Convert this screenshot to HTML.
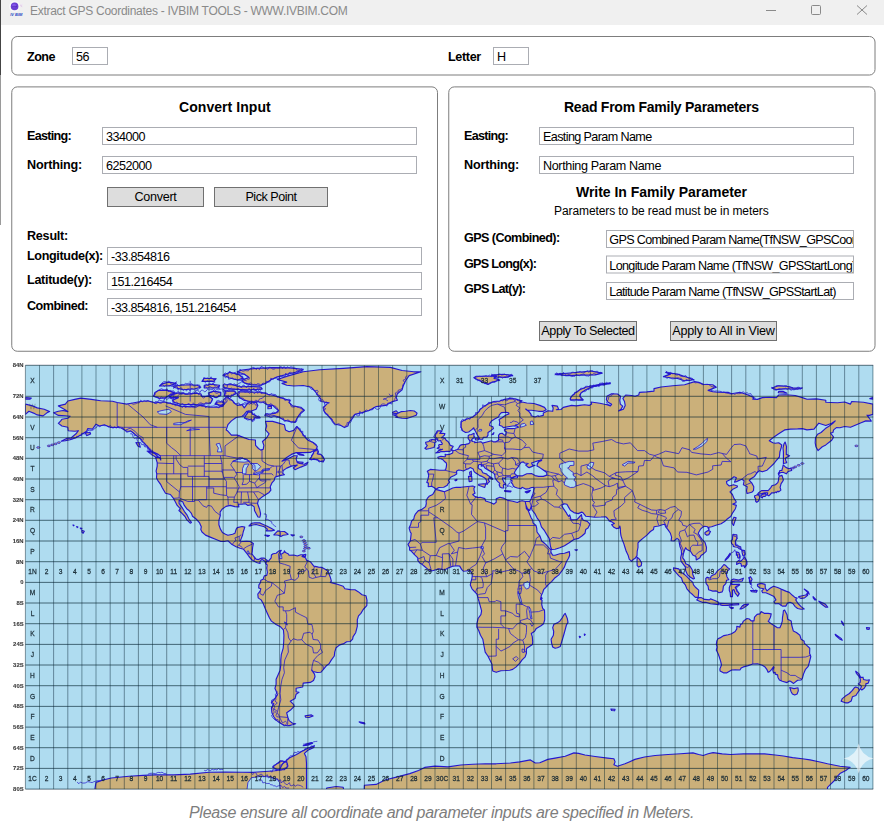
<!DOCTYPE html>
<html lang="en"><head><meta charset="utf-8"><title>Extract GPS Coordinates - IVBIM TOOLS - WWW.IVBIM.COM</title>
<style>
*{box-sizing:border-box;margin:0;padding:0}
html,body{width:884px;height:834px;overflow:hidden;background:#fff}
body{position:relative;font-family:"Liberation Sans",sans-serif;font-size:13px;color:#000}
.abs{position:absolute;white-space:nowrap}
.titlebar{left:0;top:0;width:884px;height:25px;background:#f0f0f0}
.ttl{left:30px;top:4px;font-size:12px;color:#8a8a8a;line-height:15px}
.gb{border:1px solid #8c8c8c;border-radius:6px;background:#fff;transform:translate(-0.5px,-0.5px)}
.lb{font-weight:bold;font-size:12.6px;line-height:16px;letter-spacing:-0.35px}
.hd{font-weight:bold;font-size:14px;line-height:18px;letter-spacing:-0.3px}
.in{border:1px solid #abadb3;background:#fff;height:18px;font-size:12.6px;line-height:16px;padding-left:3px;padding-top:1px;overflow:hidden;letter-spacing:-0.52px}
.bt{border:1px solid #707070;background:#dddddd;text-align:center;font-size:12.6px;line-height:18px;letter-spacing:-0.3px}
.ft{font-style:italic;color:#7d7d7d;font-size:16px;line-height:20px;letter-spacing:-0.3px}
</style></head><body>
<div class="abs titlebar"></div>
<div class="abs" style="left:0;top:0;width:1px;height:75px;background:#444"></div>
<div class="abs" style="left:0;top:75px;width:1px;height:150px;background:#9a9a9a"></div>
<svg class="abs" style="left:6px;top:0" width="22" height="20" viewBox="0 0 22 20"><circle cx="8.6" cy="6.4" r="5.6" fill="#fff" fill-opacity="0.55"/><circle cx="8.6" cy="6.4" r="3.8" fill="#6b3fd2"/><circle cx="8" cy="5.6" r="1.9" fill="#8a5cf0" fill-opacity="0.8"/><path d="M6.2 6.6 H11" stroke="#4a28a8" stroke-width="0.6"/><path d="M13.6 4.6 L17 3.6 L16 7.4 L14 7 Z" fill="#efe6f4"/><path d="M14.4 5.2 L16.2 6.6" stroke="#c9a0c8" stroke-width="0.5"/><text x="4.2" y="16" font-family="Liberation Sans,sans-serif" font-size="4.2" font-weight="bold" font-style="italic" fill="#2746c4" textLength="12.2" lengthAdjust="spacingAndGlyphs">IV BIM</text></svg>
<div class="abs ttl" id="ttl" style="letter-spacing:-0.28px">Extract GPS Coordinates - IVBIM TOOLS - WWW.IVBIM.COM</div>
<svg class="abs" style="left:750px;top:0" width="134" height="26" viewBox="0 0 134 26" fill="none" stroke="#8a8a8a" stroke-width="1"><path d="M16 10.5 H26"/><rect x="61.5" y="5.5" width="9" height="9" rx="1"/><path d="M107 5.5 L117 14.5 M117 5.5 L107 14.5"/></svg>

<svg class="abs" style="left:0;top:30px" width="884" height="330" viewBox="0 30 884 330" fill="#fff" stroke="#7d7d7d" stroke-width="1"><rect x="11.75" y="36.5" width="863.25" height="38.5" rx="5.5"/><rect x="11.75" y="86.9" width="425.75" height="264.35" rx="5.5"/><rect x="448.75" y="86.9" width="426.25" height="264.35" rx="5.5"/></svg>
<div class="abs lb" id="zone" style="letter-spacing:-0.52px;left:27px;top:49px">Zone</div>
<div class="abs in" style="left:72px;top:47px;width:36px">56</div>
<div class="abs lb" id="letter" style="letter-spacing:-0.35px;left:448px;top:49px">Letter</div>
<div class="abs in" style="left:493px;top:47px;width:36px">H</div>

<div class="abs hd" id="h1" style="letter-spacing:0.06px;left:179px;top:98px">Convert Input</div>
<div class="abs lb" id="l1" style="letter-spacing:-0.71px;left:27px;top:128px">Easting:</div>
<div class="abs in" style="left:102px;top:127px;width:315px">334000</div>
<div class="abs lb" id="l2" style="letter-spacing:-0.18px;left:27px;top:157px">Northing:</div>
<div class="abs in" style="left:102px;top:156px;width:315px">6252000</div>
<div class="abs bt" style="left:107px;top:187px;width:97px;height:20px"><span id="b1" style="letter-spacing:-0.3px">Convert</span></div>
<div class="abs bt" style="left:214px;top:187px;width:114px;height:20px"><span id="b2" style="letter-spacing:-0.48px">Pick Point</span></div>
<div class="abs lb" id="l3" style="letter-spacing:-0.24px;left:27px;top:228px">Result:</div>
<div class="abs lb" id="l4" style="letter-spacing:-0.35px;left:27px;top:248px">Longitude(x):</div>
<div class="abs in" style="left:107px;top:247px;width:315px"><span id="i4" style="letter-spacing:-0.52px">-33.854816</span></div>
<div class="abs lb" id="l5" style="letter-spacing:-0.3px;left:27px;top:272px">Latitude(y):</div>
<div class="abs in" style="left:107px;top:272px;width:315px">151.216454</div>
<div class="abs lb" id="l6" style="letter-spacing:-0.53px;left:27px;top:298px">Combined:</div>
<div class="abs in" style="left:107px;top:298px;width:315px"><span id="i6" style="letter-spacing:-0.56px">-33.854816, 151.216454</span></div>

<div class="abs hd" id="h2" style="letter-spacing:-0.25px;left:564px;top:98px">Read From Family Parameters</div>
<div class="abs lb" style="letter-spacing:-0.71px;left:464px;top:128px">Easting:</div>
<div class="abs in" style="left:539px;top:127px;width:315px"><span id="i7" style="letter-spacing:-0.62px">Easting Param Name</span></div>
<div class="abs lb" style="letter-spacing:-0.18px;left:464px;top:157px">Northing:</div>
<div class="abs in" style="left:539px;top:156px;width:315px"><span id="i8" style="letter-spacing:-0.38px">Northing Param Name</span></div>
<div class="abs hd" id="h3" style="letter-spacing:-0.03px;left:576px;top:183px">Write In Family Parameter</div>
<div class="abs" id="sub" style="letter-spacing:-0.09px;left:554px;top:203px;transform:translateY(0.6px);font-size:12px;line-height:15px">Parameters to be read must be in meters</div>
<div class="abs lb" id="l7" style="letter-spacing:-0.58px;left:464px;top:230px">GPS (Combined):</div>
<div class="abs in" style="left:606px;top:230px;width:248px;padding-left:2.3px"><span id="i9" style="letter-spacing:-0.67px">GPS Combined Param Name(TfNSW_GPSCoordinates)</span></div>
<div class="abs lb" id="l8" style="letter-spacing:-0.69px;left:464px;top:255px;transform:translateY(0.6px)">GPS Long(x):</div>
<div class="abs in" style="left:606px;top:255px;width:248px;padding-left:2.3px;transform:translateY(0.5px)"><span id="i10" style="letter-spacing:-0.67px">Longitude Param Name (TfNSW_GPSStartLong)</span></div>
<div class="abs lb" id="l9" style="letter-spacing:-0.66px;left:464px;top:281px">GPS Lat(y):</div>
<div class="abs in" style="left:606px;top:282px;width:248px;padding-left:2.3px"><span id="i11" style="letter-spacing:-0.67px">Latitude Param Name (TfNSW_GPSStartLat)</span></div>
<div class="abs bt" style="left:539px;top:321px;width:98px;height:20px"><span id="b3" style="letter-spacing:-0.43px">Apply To Selected</span></div>
<div class="abs bt" style="left:670px;top:321px;width:107px;height:20px"><span id="b4" style="letter-spacing:-0.185px">Apply to All in View</span></div>
<svg class="abs" style="left:0;top:355px" width="884" height="445" viewBox="0 355 884 445" font-family="Liberation Sans,sans-serif">
<defs><clipPath id="mc"><rect x="25.4" y="365.3" width="847.8" height="423.8"/></clipPath><filter id="bl" x="-2%" y="-2%" width="104%" height="104%"><feGaussianBlur stdDeviation="0.45"/></filter><filter id="bl2" x="-2%" y="-2%" width="104%" height="104%"><feGaussianBlur stdDeviation="0.25"/></filter></defs>
<g filter="url(#bl)">
<rect x="25.4" y="365.3" width="847.8" height="423.8" fill="#afdcf0"/>
<g clip-path="url(#mc)">
<path d="M53.6,412.8 58.4,411.3 63.1,410.5 67.8,411.6 64.2,409.2 58.4,405.9 65.4,404.1 67.8,401.0 74.8,399.4 80.7,398.1 91.3,399.4 100.7,400.7 112.5,401.2 117.2,402.5 126.6,404.1 131.3,403.3 140.8,401.5 147.8,400.7 154.9,402.8 164.3,402.0 173.7,404.1 180.8,406.1 190.2,406.9 194.9,406.1 202.0,405.4 209.0,407.2 218.4,407.2 223.2,406.1 224.3,403.3 223.2,400.2 226.7,396.6 230.2,398.9 232.6,400.7 233.7,402.8 237.3,405.4 242.0,404.6 244.3,407.9 247.9,402.8 256.1,402.3 257.8,405.4 256.1,409.2 251.4,411.0 246.7,411.3 244.3,414.4 242.0,416.5 236.1,417.5 231.4,420.9 227.9,424.7 226.2,429.9 227.4,430.7 231.4,435.1 237.3,435.1 242.0,436.9 249.0,439.5 255.4,440.0 255.6,445.4 258.5,448.5 260.8,450.1 263.2,449.3 263.9,445.4 262.5,441.5 266.7,437.7 269.1,433.8 265.5,429.9 266.7,426.0 265.5,421.4 272.6,421.4 279.6,423.4 284.4,424.7 285.5,429.9 289.1,431.7 293.8,430.4 296.6,426.5 300.8,431.2 304.4,436.4 307.9,440.2 313.8,442.8 317.3,446.7 316.1,449.3 310.3,452.4 303.2,452.6 296.1,452.6 291.4,454.4 286.7,457.5 282.0,461.2 286.7,459.4 293.8,455.7 297.3,455.7 296.1,458.8 297.3,462.7 299.7,463.5 304.4,464.3 307.9,462.2 306.7,464.8 300.8,467.1 295.0,469.7 293.3,467.9 297.3,465.0 291.4,466.1 286.7,468.1 283.2,470.5 282.7,473.3 284.4,474.6 280.8,475.4 275.6,476.9 274.9,477.7 274.2,480.3 271.9,482.9 270.2,486.7 270.9,490.1 269.1,492.4 265.5,494.8 262.0,497.1 258.5,499.7 257.5,503.5 259.6,509.2 260.6,513.9 259.9,517.2 258.0,517.0 256.6,514.4 254.5,510.5 254.2,506.9 251.4,504.8 247.9,505.4 245.5,503.8 242.0,504.1 238.5,504.3 238.9,506.9 234.9,506.6 230.2,505.4 226.0,506.4 222.0,509.2 220.1,512.1 220.3,515.7 218.9,520.3 218.9,524.7 220.3,528.9 222.4,532.5 225.5,534.3 227.9,535.3 232.6,534.3 234.9,533.3 236.1,529.4 237.3,527.6 242.0,526.5 244.8,527.1 243.2,532.0 242.5,535.3 241.3,538.4 240.1,541.3 243.2,541.5 246.7,541.3 250.2,541.5 253.3,543.6 252.6,547.5 252.3,551.3 251.9,553.9 253.8,556.5 256.1,559.1 258.5,559.6 261.3,558.1 264.3,558.1 266.9,560.1 265.8,563.8 264.6,560.9 262.0,559.4 259.9,561.4 260.1,563.5 257.3,562.7 254.2,561.2 252.1,560.1 249.0,556.5 247.2,553.9 243.6,549.3 240.1,548.2 236.1,546.7 232.1,544.6 227.9,540.8 224.3,541.5 220.8,541.5 216.1,539.5 210.2,537.1 205.5,535.1 202.0,532.0 200.8,529.4 201.3,526.8 199.6,522.9 196.1,519.0 192.5,516.2 191.4,513.4 189.0,510.5 186.7,508.7 184.3,505.4 182.7,501.7 179.1,500.4 179.1,503.5 182.0,507.4 184.3,511.3 187.1,515.2 189.0,519.0 191.4,522.4 190.2,523.2 186.7,519.6 185.0,516.5 182.0,513.4 178.9,510.5 180.3,508.7 177.2,505.4 174.9,501.0 173.5,498.4 170.4,494.5 165.5,493.2 162.4,488.0 160.8,484.7 157.7,480.3 156.5,478.0 156.8,473.8 156.1,471.2 157.2,466.1 157.2,462.7 155.6,457.3 159.6,457.5 160.8,460.1 160.1,455.7 156.1,453.2 150.2,450.6 147.8,446.7 143.1,442.3 140.8,438.9 136.0,435.1 131.3,431.2 126.6,431.2 120.7,427.8 114.9,427.3 110.2,427.3 104.3,424.7 99.6,426.0 96.0,424.2 92.5,429.1 87.8,428.6 86.6,431.2 80.7,435.1 76.0,437.7 70.1,439.7 65.4,440.8 61.2,441.3 66.6,438.4 71.3,437.7 76.0,433.8 78.4,430.7 74.8,431.2 68.2,430.7 67.8,427.3 61.9,426.0 58.4,423.4 60.7,420.9 61.9,419.3 67.8,418.3 70.1,416.2 65.4,415.7 58.4,415.4 53.6,412.8Z M266.9,560.1 268.1,561.7 271.2,557.8 271.4,555.0 273.1,553.7 276.1,553.2 279.2,550.8 281.3,550.3 279.9,552.6 280.8,554.4 283.9,552.6 284.4,550.8 285.5,552.6 288.4,553.9 289.1,555.2 293.8,555.0 297.3,556.0 300.8,554.7 303.4,554.7 302.0,556.5 305.5,557.8 306.7,560.4 310.3,561.7 313.8,566.1 318.5,567.1 322.0,567.4 325.6,569.4 327.9,571.0 330.3,577.2 331.4,581.1 330.3,582.4 335.0,583.6 337.3,584.2 343.2,586.2 344.9,588.8 350.3,589.6 355.0,589.8 358.5,591.9 362.0,594.8 366.0,595.8 367.0,600.4 366.8,605.6 363.2,609.5 360.9,613.4 358.5,615.9 357.3,619.8 357.3,626.3 355.7,632.7 353.1,636.6 352.6,639.2 350.3,641.5 346.7,641.8 343.2,643.9 339.7,644.9 336.1,647.7 334.7,652.1 334.3,656.0 331.4,659.9 329.1,663.8 326.3,665.8 323.2,669.7 320.8,672.3 317.3,672.5 313.1,671.5 311.7,670.2 314.5,674.1 315.0,676.7 313.5,680.5 310.3,682.4 303.2,683.1 302.7,687.0 296.1,688.3 296.1,691.7 299.0,692.2 296.1,694.2 295.0,698.6 290.2,701.2 293.8,704.6 294.2,706.4 290.2,710.3 286.7,712.8 287.9,717.5 288.4,718.8 289.1,720.6 292.6,723.2 295.7,723.7 292.6,724.7 287.9,725.8 284.4,725.3 279.6,722.7 276.1,720.1 273.8,716.7 271.9,712.8 271.4,707.7 273.8,703.8 271.4,702.5 274.9,698.6 277.3,694.8 276.1,690.9 274.9,688.3 276.1,684.4 276.1,679.3 277.8,675.4 280.1,670.2 280.8,665.0 280.8,659.9 281.3,654.7 283.2,648.2 283.7,641.8 283.9,635.3 283.4,629.9 280.8,627.1 276.1,624.5 271.4,621.1 269.5,618.0 267.4,613.4 265.1,608.2 263.2,603.5 261.1,599.9 258.2,597.9 257.8,594.0 260.1,591.1 260.8,588.8 258.7,588.0 258.9,584.9 260.6,582.4 260.8,580.3 263.2,579.3 263.6,577.7 264.3,575.9 266.7,575.4 267.4,572.5 266.7,568.1 267.2,565.0 265.8,563.8Z M277.3,379.5 289.1,375.6 303.2,371.8 319.7,369.7 343.2,368.4 366.8,366.6 390.3,367.4 402.1,370.5 413.8,371.8 420.9,371.8 409.1,375.6 405.6,380.8 403.2,386.0 402.1,389.8 397.4,393.7 396.2,397.6 397.4,400.2 391.5,402.0 385.6,405.4 376.2,406.6 369.1,410.5 362.0,412.6 355.0,414.4 352.6,418.3 349.1,422.1 347.9,426.0 344.4,427.6 340.9,425.5 335.0,424.0 331.4,419.6 327.9,415.7 324.4,411.8 323.2,407.9 326.7,404.1 329.1,402.8 320.8,401.5 320.8,398.9 318.5,396.3 315.0,391.1 311.4,387.3 303.2,385.5 293.8,386.0 286.7,385.2 282.0,383.4 286.7,382.1 277.3,379.5Z M435.3,489.8 436.7,489.6 442.1,491.1 444.4,491.7 449.1,489.8 452.7,488.0 456.2,487.3 460.9,487.3 465.6,486.7 470.3,486.2 472.7,486.0 475.0,486.7 473.9,488.3 474.1,490.6 475.0,493.2 472.7,494.5 475.0,496.6 478.6,497.6 480.2,497.3 484.9,498.6 485.6,501.0 490.3,502.5 493.9,504.1 496.2,502.3 496.2,498.9 499.8,497.3 503.3,498.1 508.0,500.4 512.7,501.2 517.4,502.5 519.8,501.2 522.1,500.7 525.2,501.5 525.9,504.8 526.4,508.7 528.2,510.5 529.2,513.1 531.1,517.8 532.7,520.3 533.0,522.9 536.0,525.5 536.7,528.1 537.0,532.0 539.8,535.8 541.7,541.0 543.3,542.3 545.7,544.4 549.2,548.2 551.1,550.1 550.8,552.1 552.7,555.2 555.1,555.2 559.8,553.7 564.5,553.2 569.4,551.6 569.7,555.2 568.5,558.3 566.4,561.7 564.5,566.9 562.1,570.7 558.6,575.1 555.1,577.7 551.6,581.6 548.0,584.9 545.7,587.5 543.8,589.3 542.6,592.7 541.4,595.3 540.5,599.2 542.1,600.4 541.7,604.3 542.6,608.2 544.5,610.3 544.7,614.7 544.7,619.8 543.6,623.7 541.0,625.8 536.3,628.4 534.6,631.2 531.3,633.5 532.3,636.6 532.7,641.8 532.5,644.4 526.8,648.2 526.4,649.5 526.4,653.4 525.2,656.8 522.1,659.9 519.8,663.2 516.2,666.9 512.7,669.4 509.7,670.2 505.6,670.5 500.9,670.7 496.2,672.3 492.7,671.0 492.2,667.1 492.0,664.3 489.9,659.9 488.0,656.3 485.2,652.1 484.2,647.0 483.3,641.8 482.8,639.2 480.5,635.3 478.6,630.2 476.9,627.1 476.9,623.7 478.1,618.5 480.9,614.7 481.6,610.8 480.2,605.6 478.1,598.4 477.9,597.3 476.9,594.0 475.0,592.2 472.0,588.8 470.3,584.9 471.0,581.6 471.7,579.5 472.2,576.4 472.2,574.1 471.5,572.3 469.9,570.5 468.0,570.7 465.6,571.0 463.3,571.2 461.6,569.4 459.7,566.1 457.2,565.8 452.7,566.3 449.1,567.6 444.4,570.0 442.1,569.2 438.6,568.9 435.0,570.0 431.5,571.0 428.0,569.4 423.7,565.8 422.1,564.3 419.7,563.0 417.8,560.4 417.8,557.8 415.0,555.2 413.8,553.9 411.5,551.3 409.6,550.1 409.6,547.5 408.0,544.4 410.3,541.0 410.8,537.1 411.2,533.3 410.3,532.0 409.1,528.1 410.8,524.2 411.5,521.1 413.8,519.0 414.3,516.5 415.2,514.4 418.1,510.8 422.1,509.2 425.6,506.6 426.3,503.5 426.1,501.0 427.3,498.4 429.1,496.3 432.7,494.5 434.3,491.9 435.3,489.8Z M436.0,489.3 434.3,487.8 431.7,486.2 428.2,486.7 428.4,483.1 426.8,482.4 428.0,479.0 428.7,475.9 428.2,473.1 427.3,471.2 430.3,469.4 435.0,469.7 439.7,470.2 444.4,470.2 445.6,469.7 446.3,467.1 446.6,464.5 446.3,463.0 444.2,461.2 443.3,460.1 440.9,458.8 438.6,458.6 437.8,457.3 440.9,456.3 444.4,456.8 445.4,456.5 445.1,454.2 446.3,454.7 449.4,454.4 452.7,452.9 452.9,450.8 455.0,450.3 457.4,449.5 458.6,448.0 460.2,445.4 462.1,444.6 465.6,444.4 468.0,443.9 469.4,443.1 470.1,442.0 469.4,440.2 468.2,438.7 468.2,435.8 469.4,434.8 471.5,434.6 474.1,433.3 473.9,436.4 474.8,436.9 473.2,438.2 471.7,439.5 471.7,440.8 472.7,441.5 475.0,441.8 474.6,442.8 477.4,442.3 480.9,441.8 482.6,443.1 486.8,442.0 491.5,440.8 493.2,441.8 495.8,441.8 498.6,440.2 498.6,437.7 498.6,435.1 500.2,433.5 502.1,433.3 504.5,435.1 505.9,435.1 506.4,431.7 504.5,430.9 504.5,429.4 508.0,428.6 512.7,428.6 515.1,428.3 518.6,427.3 516.2,425.8 512.7,426.0 508.0,426.8 503.3,427.6 502.1,426.3 499.3,425.2 499.8,422.1 499.1,419.6 502.1,417.8 505.6,415.2 508.9,413.9 508.7,412.8 506.1,412.3 501.4,412.6 499.3,414.9 498.6,417.0 495.1,418.8 491.5,420.9 489.9,423.4 489.6,425.5 492.9,426.8 493.4,428.6 491.1,430.4 488.0,432.5 488.0,435.1 486.8,437.1 483.3,437.4 482.6,439.2 479.8,439.2 478.8,437.1 476.9,434.3 475.5,431.2 474.1,429.1 473.9,427.8 471.5,429.9 468.7,432.0 465.6,432.5 462.6,430.7 461.2,427.3 460.9,424.7 461.2,422.1 464.0,420.3 469.2,418.3 472.7,417.0 476.2,414.4 478.6,411.8 480.2,409.2 483.8,406.6 486.8,404.8 490.3,402.8 493.9,401.5 499.8,401.0 504.5,399.4 509.7,398.6 515.1,398.9 519.8,400.2 522.1,400.7 519.8,402.0 523.3,402.3 526.8,403.0 533.9,403.5 539.8,405.4 544.5,407.4 546.1,409.7 543.3,411.3 538.6,411.3 531.5,410.3 526.8,410.0 525.7,409.0 529.2,411.8 531.1,414.4 531.1,415.7 535.1,417.0 538.1,415.7 538.6,416.5 543.3,415.4 543.3,413.1 548.0,410.8 552.7,411.3 553.2,407.9 552.0,405.4 557.4,406.1 558.6,409.2 556.3,409.7 561.0,409.5 563.3,407.4 571.6,405.4 576.3,405.9 579.8,405.4 584.5,404.8 589.2,405.4 591.6,404.1 591.1,402.0 599.8,403.3 604.5,404.3 606.9,404.6 610.4,405.9 611.6,404.3 608.1,402.3 606.4,399.7 606.9,396.3 611.6,393.7 617.5,394.0 620.5,396.3 619.8,400.2 620.3,404.1 622.7,406.1 621.0,409.2 618.6,411.0 623.4,409.2 625.2,405.4 624.5,401.5 622.9,398.4 625.7,395.0 631.6,395.5 635.1,396.3 638.7,395.0 639.4,392.4 646.9,391.9 654.0,391.1 654.0,388.6 661.0,387.0 672.8,385.7 684.6,384.7 694.7,381.6 698.7,382.4 703.4,384.2 712.8,384.7 716.3,387.3 708.1,390.4 712.8,391.7 717.5,392.2 728.1,392.4 731.6,393.7 739.9,392.2 748.1,395.0 754.0,397.6 752.8,399.2 757.5,399.4 762.3,397.6 769.3,397.3 776.4,397.6 778.7,395.0 785.8,394.8 795.2,395.5 802.3,397.6 807.0,399.2 816.4,398.9 825.8,400.2 825.8,402.3 830.5,402.5 837.6,402.8 844.6,402.0 850.5,404.1 851.7,401.5 863.5,402.3 872.9,404.1 872.9,414.4 869.4,415.4 867.0,415.2 869.4,418.3 871.3,421.1 865.8,420.9 861.1,422.7 856.4,424.7 850.5,427.3 844.6,426.5 839.9,427.8 836.4,427.6 833.6,429.9 832.9,432.5 830.5,433.0 833.6,437.1 831.7,440.2 830.1,441.5 825.8,444.9 822.3,446.7 818.0,450.6 815.9,446.7 815.2,442.8 815.5,437.7 817.6,434.3 821.1,432.5 825.3,428.6 829.3,426.0 832.9,423.4 835.2,420.9 831.7,423.2 825.8,425.5 818.8,423.2 814.0,429.1 807.0,429.9 802.3,428.6 797.6,428.9 790.5,429.1 784.6,429.9 778.7,433.8 774.0,436.9 769.3,440.8 772.8,442.8 775.2,443.3 778.7,442.8 781.8,444.9 781.1,448.0 779.9,451.9 779.4,457.0 776.4,460.4 774.0,463.5 770.5,466.9 767.0,470.2 762.3,471.8 759.4,470.7 756.8,473.1 754.5,476.4 750.5,479.0 749.3,480.3 751.7,482.9 753.8,486.7 753.5,490.6 751.7,492.2 747.0,493.5 746.5,490.6 747.2,486.7 743.4,484.7 744.1,480.8 741.8,479.3 736.4,481.6 734.5,482.1 736.4,477.7 734.0,476.7 730.5,479.5 726.5,481.6 726.9,483.9 729.3,486.0 733.5,484.7 737.5,486.0 737.3,487.0 732.8,489.3 730.0,491.9 732.4,494.5 734.0,498.4 736.1,501.5 735.9,502.8 732.8,504.1 736.4,505.4 735.4,508.7 732.8,512.6 730.7,516.5 726.9,519.3 724.6,521.6 721.1,523.7 717.5,524.7 715.2,525.5 711.6,526.8 708.8,527.3 709.0,529.9 707.6,526.8 704.6,526.3 702.2,527.6 700.3,529.4 698.2,533.3 699.9,536.4 702.2,539.7 705.0,542.3 706.5,547.5 706.2,551.3 703.4,553.9 701.0,555.5 699.9,557.8 696.3,559.9 695.9,556.5 692.8,555.0 690.5,551.3 686.9,549.5 685.7,547.7 684.6,550.1 683.4,553.9 682.7,557.8 684.6,560.4 685.7,563.8 688.1,564.8 690.0,566.3 692.3,570.0 692.8,574.6 694.5,578.5 693.3,579.0 690.5,577.2 687.6,574.9 685.7,570.7 685.3,566.9 683.4,564.3 681.0,561.2 680.6,557.8 681.5,553.9 681.3,550.1 679.9,546.2 679.2,542.3 678.9,539.7 677.0,538.4 674.0,541.0 671.1,540.8 671.6,537.1 670.4,533.3 668.1,529.9 665.7,526.8 664.6,524.2 662.2,524.7 658.7,526.0 654.0,526.8 653.5,529.4 650.4,531.5 646.9,535.1 642.9,538.4 639.8,541.0 638.0,542.8 638.0,547.5 637.2,551.3 637.0,555.7 635.1,558.3 633.2,559.4 631.6,561.4 629.2,559.1 628.1,555.2 626.2,551.3 625.0,547.5 623.8,543.6 622.2,539.7 621.0,535.8 620.5,532.7 620.3,528.1 619.8,526.0 619.1,528.1 616.3,528.6 613.9,527.3 611.6,524.7 614.4,523.4 611.1,521.6 609.2,520.9 607.6,518.5 605.7,516.7 601.0,517.0 595.1,517.2 590.4,516.7 585.7,516.2 583.3,513.1 581.7,512.1 578.2,513.6 573.9,512.6 570.4,510.3 568.7,507.4 566.9,504.3 564.3,503.8 562.1,504.8 562.1,506.4 563.8,509.2 566.2,512.6 567.3,514.7 568.7,516.5 569.7,514.9 570.6,517.8 570.9,519.8 573.9,519.8 577.0,519.6 579.8,516.5 581.5,514.7 581.9,517.8 583.3,520.3 587.3,521.4 589.9,524.2 588.0,528.1 585.7,529.6 585.0,533.3 582.2,535.8 578.6,538.4 573.9,539.5 569.2,542.8 564.5,545.7 559.8,547.7 555.1,549.3 551.6,549.5 550.4,546.2 549.9,542.3 549.2,538.4 546.8,534.6 544.5,530.7 541.4,526.8 539.8,521.6 537.0,517.8 535.1,513.9 532.0,510.0 531.3,506.1 529.9,510.0 529.7,510.5 527.5,508.7 525.9,505.1 525.9,504.8 525.2,501.5 529.7,501.5 531.1,498.9 531.8,496.8 533.0,493.7 533.7,490.6 533.9,488.6 534.1,487.3 531.5,487.5 529.2,488.6 525.7,489.1 522.1,487.3 521.0,488.6 517.4,488.0 515.1,487.3 513.4,486.2 512.7,484.2 511.5,482.9 512.2,480.8 510.8,480.3 510.8,478.7 513.9,478.0 517.4,477.7 517.7,475.9 522.1,475.9 526.8,473.8 531.5,473.6 535.1,475.6 538.6,476.4 543.3,476.4 546.8,475.1 546.8,472.5 543.3,470.0 539.8,467.6 537.0,466.1 537.4,463.5 539.3,461.4 541.7,460.4 538.6,460.6 535.1,461.7 531.5,463.0 532.7,465.3 535.1,465.3 532.7,466.1 529.2,467.6 528.0,467.1 525.7,465.0 528.2,463.5 524.5,463.0 523.3,461.9 521.4,462.2 519.1,464.8 518.8,466.1 516.7,468.7 515.1,471.2 514.4,472.5 515.1,474.1 517.2,475.6 515.1,476.4 513.9,476.7 512.0,477.7 510.4,477.2 508.0,476.7 505.6,477.2 504.9,478.5 505.6,479.0 504.0,478.2 502.8,477.7 502.4,479.0 503.3,480.8 504.0,482.4 505.6,483.6 505.6,484.9 503.8,484.2 503.3,485.5 503.8,488.0 502.1,488.0 500.2,487.3 499.1,484.7 499.8,483.4 498.1,481.8 496.7,480.3 495.1,478.0 494.8,475.1 493.9,473.3 491.5,472.0 488.0,470.0 484.9,467.9 483.3,465.6 481.2,466.1 481.4,464.3 478.6,464.8 478.1,467.4 478.8,468.7 481.4,470.0 482.8,472.8 486.8,474.1 487.3,475.1 490.3,476.9 492.7,478.5 492.5,479.5 489.2,477.7 488.2,479.8 489.6,481.6 488.0,482.9 487.1,484.4 486.1,483.6 486.8,481.6 485.9,479.0 484.0,477.4 482.1,476.4 479.8,475.6 477.9,474.3 475.0,472.5 473.9,471.2 473.2,468.9 470.3,467.6 468.0,468.9 466.3,469.4 463.3,471.0 460.9,470.2 458.6,470.0 456.4,471.2 456.7,473.1 456.7,474.1 454.3,475.4 451.0,476.9 449.1,479.5 448.4,480.5 449.6,482.1 447.7,484.2 447.3,485.2 444.7,486.7 443.7,487.3 438.8,487.5 436.7,488.8 436.0,489.3Z M25.4,404.1 32.5,405.9 37.2,407.9 44.2,409.2 49.6,411.6 46.6,413.1 43.1,415.9 37.2,414.9 33.6,413.1 28.9,411.3 25.4,414.4Z M25.4,804.6 93.7,804.6 95.1,787.8 96.0,782.4 103.1,780.0 111.3,778.0 129.0,776.2 143.1,775.4 154.9,774.9 173.7,774.9 190.2,774.1 209.0,772.3 225.5,772.0 242.0,772.3 253.8,772.3 265.5,771.5 274.9,770.7 279.2,770.0 282.7,763.8 289.1,758.1 296.6,754.5 302.0,751.3 307.9,748.2 314.3,745.9 313.8,747.5 307.9,750.3 304.4,753.4 306.0,756.8 306.5,763.2 306.5,804.6 324.4,804.6 326.7,788.0 336.1,786.5 343.2,787.3 346.7,804.6 363.7,804.6 364.4,785.2 376.2,784.4 384.9,780.0 397.4,776.9 409.8,773.6 418.5,770.5 424.7,767.4 435.0,766.1 448.0,766.9 460.7,765.0 472.7,764.3 485.4,763.8 496.2,763.8 510.4,763.0 519.8,761.9 530.4,759.9 535.3,763.0 539.8,762.7 547.8,759.4 555.1,758.1 565.2,756.3 573.9,752.9 578.6,753.4 585.0,755.0 595.1,756.5 607.6,758.1 613.9,758.8 615.1,761.9 613.9,764.8 617.5,766.3 625.0,763.8 629.2,761.9 634.9,759.4 644.5,757.0 655.1,755.5 668.1,754.5 680.6,753.7 693.0,752.9 698.7,754.5 703.2,755.5 708.1,753.7 713.1,752.6 722.2,753.9 730.5,754.5 743.4,753.9 755.2,753.7 764.6,753.9 775.2,755.0 783.4,756.0 792.6,757.6 802.3,758.8 810.0,759.9 818.8,761.7 827.5,763.8 839.9,766.3 850.1,767.4 845.8,770.5 839.9,773.6 836.4,777.4 835.0,780.0 830.5,784.4 827.5,787.3 827.0,804.6Z M784.6,610.0 787.0,614.7 787.7,619.3 791.2,621.1 791.7,625.0 793.3,630.9 796.4,632.5 799.9,635.3 801.1,639.2 804.2,641.3 804.2,643.1 807.0,645.7 809.8,648.2 809.6,653.4 810.8,656.5 809.3,662.5 808.2,666.3 805.3,669.7 803.5,674.1 802.3,678.5 801.1,680.0 797.6,680.3 793.6,683.4 790.5,681.3 789.3,681.1 787.0,682.6 782.3,681.3 779.4,680.0 778.0,677.4 777.6,674.9 775.2,674.1 775.2,672.3 773.6,673.1 772.8,670.2 774.0,667.6 773.6,666.6 771.7,669.4 769.3,671.8 768.1,672.3 767.0,669.7 765.1,667.1 762.3,665.3 757.5,663.8 752.8,664.0 748.1,665.6 743.4,666.9 741.1,668.1 739.9,670.0 735.2,669.7 731.6,670.0 726.9,672.8 723.4,672.8 720.1,671.0 719.9,668.9 721.5,665.0 720.6,661.2 719.4,657.3 718.0,653.4 716.3,650.1 717.1,647.0 716.3,644.4 716.8,641.0 718.0,638.7 719.9,637.9 723.9,635.6 728.1,634.8 731.6,633.8 735.2,631.5 736.8,628.9 736.8,626.3 739.9,627.1 740.4,624.5 742.2,623.7 743.4,621.1 747.0,618.5 749.3,619.0 751.2,620.9 754.0,620.9 754.5,617.2 757.1,614.4 759.9,613.9 761.1,611.6 764.6,613.4 768.1,613.4 771.2,613.9 770.5,617.2 768.8,620.6 768.1,621.1 770.5,623.2 774.0,625.5 777.1,627.6 779.9,627.8 781.1,625.0 782.3,621.1 782.5,617.2 783.0,614.7 783.4,610.8 784.6,610.0Z M789.8,687.5 794.0,688.6 798.0,687.8 798.3,690.9 797.1,694.0 794.7,695.0 792.4,694.0 791.0,691.4 789.8,687.5Z M435.7,452.9 439.3,452.4 440.9,451.6 444.4,451.6 446.8,451.3 449.9,451.3 452.4,450.1 450.8,449.3 452.0,448.5 453.2,446.4 450.3,445.4 449.6,444.1 448.9,442.8 448.0,441.5 446.1,440.2 445.1,438.4 443.3,437.7 441.4,437.7 442.8,436.6 444.4,435.1 444.9,433.5 441.4,433.3 439.7,433.5 440.9,432.0 442.1,430.9 437.4,430.9 436.2,433.0 435.5,435.1 435.0,436.4 436.2,437.7 435.7,439.5 437.8,438.7 437.6,440.5 438.6,441.0 440.9,440.5 441.1,442.0 442.3,443.3 442.1,444.4 439.0,444.6 438.6,445.9 439.5,447.0 437.1,448.2 439.0,449.0 441.6,449.5 442.6,449.3 440.2,450.1 438.6,450.6 437.4,451.9 435.7,452.9Z M434.1,447.5 434.8,444.6 434.6,442.8 436.2,441.8 435.0,439.7 432.0,439.5 429.6,440.2 429.1,441.5 425.6,442.3 426.1,444.4 427.3,445.4 426.1,447.2 424.9,448.2 426.3,449.3 429.8,448.5 432.7,447.7 434.1,447.5Z M395.7,417.2 402.1,418.3 406.8,418.5 412.7,416.5 416.2,415.2 417.1,413.1 414.3,411.0 410.3,410.5 405.6,411.3 401.4,411.6 398.5,413.1 396.2,410.8 392.6,412.3 392.6,413.1 397.4,413.6 396.2,414.7 392.6,414.7 397.4,416.2 395.7,417.2Z M757.3,494.5 761.1,493.7 764.6,492.9 767.7,492.9 767.2,495.0 768.8,495.8 771.2,493.5 771.7,492.7 774.5,492.9 775.9,491.9 776.4,492.7 778.0,491.1 778.7,491.9 780.9,490.1 780.1,487.3 781.1,483.6 782.5,481.6 783.4,480.0 782.7,477.7 782.0,475.4 780.6,475.9 779.4,475.9 778.7,477.7 778.5,480.3 777.8,482.6 775.4,484.7 772.4,485.5 771.7,486.0 771.0,487.3 769.3,489.3 768.1,490.6 764.6,490.6 761.5,490.6 758.7,492.7 757.3,494.5Z M757.3,494.8 759.2,495.5 759.7,497.6 758.5,501.0 756.8,502.3 755.7,501.5 755.7,498.9 754.5,497.1 754.7,495.8 756.1,495.3 757.3,494.8Z M760.8,495.8 762.3,494.5 765.1,493.7 766.3,495.0 765.1,496.3 763.0,496.3 762.3,497.9 761.1,497.1 760.8,495.8Z M778.7,475.1 779.4,473.1 781.1,472.5 783.0,472.3 786.3,473.8 788.1,471.5 791.7,470.5 791.0,468.1 788.9,468.7 785.8,467.4 783.2,464.8 782.7,467.4 781.8,470.5 779.9,470.5 779.4,471.8 778.3,473.3 778.7,475.1Z M783.4,463.5 786.7,462.7 785.8,460.4 785.3,458.3 789.6,455.7 786.3,454.4 786.3,450.6 786.5,446.7 785.8,444.1 785.1,442.0 783.9,444.1 783.0,448.0 783.4,451.9 783.4,455.7 783.4,459.6 783.4,463.5Z M734.0,517.2 736.1,517.8 735.2,520.3 733.5,525.5 732.1,523.2 732.1,520.9 734.0,517.2Z M705.0,532.5 708.1,530.4 710.5,531.5 708.8,534.6 706.9,535.3 705.0,534.0 705.0,532.5Z M637.2,557.3 639.4,559.1 641.7,563.0 641.2,565.8 638.7,567.1 637.2,565.6 637.0,561.7 637.2,557.3Z M732.8,534.6 736.8,534.8 737.1,538.4 735.4,541.0 735.4,544.9 737.5,545.7 740.6,546.7 741.1,549.5 739.2,548.8 737.5,547.2 735.2,547.0 733.3,546.4 733.1,544.9 731.6,543.6 731.2,540.5 732.4,539.7 732.6,537.1 732.8,534.6Z M744.6,557.0 746.5,560.4 747.0,564.3 745.8,566.1 744.6,567.6 744.1,565.6 741.5,566.3 741.1,563.8 739.4,563.0 736.6,564.5 736.8,562.2 738.7,560.4 740.6,561.4 742.7,559.4 744.6,557.0Z M741.8,550.1 744.6,550.6 745.1,553.9 743.9,556.0 742.9,555.7 742.2,552.9 741.8,550.1Z M736.4,551.9 738.7,552.6 739.9,555.2 739.2,558.3 737.8,557.8 737.5,555.2 736.4,555.2 736.4,551.9Z M725.1,560.7 728.1,557.8 730.5,554.4 730.0,553.2 728.1,556.0 725.3,559.6Z M707.2,577.2 710.5,578.2 711.2,575.9 715.2,574.1 717.5,570.7 721.1,568.1 723.9,564.5 725.8,565.6 728.1,568.1 729.8,568.9 727.4,571.2 726.2,573.3 726.9,576.7 728.8,579.8 726.5,580.3 725.8,583.6 723.4,586.2 722.9,590.1 722.2,591.9 718.9,592.7 716.3,590.9 712.8,591.1 708.6,589.8 708.1,586.2 706.2,583.6 705.8,581.1 705.8,578.5 707.2,577.2Z M673.5,567.9 678.7,568.9 681.5,572.5 684.6,574.6 686.9,576.7 690.0,579.8 692.8,582.4 693.5,584.9 695.2,587.0 698.7,590.1 698.5,594.0 698.2,597.3 695.4,597.3 692.8,594.8 690.0,592.4 686.9,588.8 685.3,584.9 682.7,581.8 681.5,578.0 678.9,575.9 676.3,572.8 673.7,570.0 673.5,567.9Z M696.8,599.9 698.7,597.6 701.0,597.6 704.6,599.4 709.3,599.9 710.5,598.9 714.2,600.2 718.7,602.3 718.5,604.6 714.5,604.1 710.5,603.8 705.8,602.3 702.2,602.3 699.6,601.2 696.8,599.9Z M719.9,603.3 724.6,603.5 729.3,603.8 732.8,603.8 738.7,603.5 738.7,604.8 731.6,605.1 726.9,605.4 722.2,605.4 719.9,604.6Z M739.9,609.0 742.2,606.1 744.6,604.6 748.6,604.1 747.0,605.6 743.4,607.9 741.1,609.0Z M729.3,606.9 733.5,607.9 731.6,608.7Z M731.2,580.3 733.5,579.0 738.7,580.0 743.4,578.2 742.2,581.1 739.4,581.3 735.2,581.1 732.1,581.6 731.6,584.4 735.2,584.4 739.4,584.2 739.7,584.9 736.4,586.5 735.2,587.5 737.1,590.6 739.2,593.5 737.8,596.3 736.4,594.5 735.2,593.2 734.0,589.6 732.6,590.1 732.6,594.8 732.4,596.6 730.5,596.6 730.2,592.7 729.3,590.6 729.3,587.5 730.5,584.4 731.2,580.3Z M749.3,577.4 750.5,576.7 752.1,579.3 751.0,581.6 750.5,584.4 749.5,581.8 749.3,577.4Z M750.5,590.6 757.1,590.6 756.4,592.2 751.7,591.7Z M757.5,584.4 761.1,583.4 765.1,584.4 765.3,588.3 767.0,590.9 770.5,588.0 773.6,586.2 777.6,587.5 781.1,589.1 785.8,591.1 789.3,592.4 792.4,595.3 795.2,597.6 797.1,598.1 795.7,599.9 798.0,603.5 801.1,606.6 804.2,609.0 801.1,609.2 797.6,608.5 795.2,606.6 792.9,603.5 790.0,602.3 787.4,603.3 785.8,606.1 782.3,606.1 778.7,603.5 775.2,603.8 774.0,601.7 775.9,599.9 774.0,596.6 769.3,594.2 765.8,592.7 762.7,592.7 761.8,590.9 763.9,588.8 759.9,588.0 757.5,586.0 757.5,584.4Z M798.7,596.6 802.3,595.8 805.8,595.0 807.5,593.2 807.7,595.3 804.6,597.9 801.1,598.4 798.7,597.3Z M804.2,589.1 808.2,591.7 809.3,594.2 808.4,593.2 805.8,590.6Z M813.1,596.6 816.2,599.9 814.8,599.9 813.3,597.9Z M818.8,601.2 825.3,604.1 827.7,607.2 825.8,607.2 821.1,603.8Z M835.2,634.3 841.1,638.4 842.3,640.2 839.5,638.9 835.7,635.6Z M841.4,621.1 843.0,622.9 843.7,625.3 842.3,623.7Z M866.5,627.6 869.6,627.8 869.1,629.4 866.8,629.1Z M855.7,671.2 858.8,673.6 860.7,677.4 863.0,677.2 863.5,679.5 867.0,680.3 869.4,679.8 868.2,683.1 865.8,683.9 865.8,685.7 864.2,688.3 861.8,689.9 860.4,689.1 861.4,686.5 860.4,685.2 858.3,683.9 860.2,682.4 860.4,679.3 859.2,676.7 856.4,673.3 855.7,671.2Z M855.7,687.0 858.3,688.0 859.5,690.1 857.1,693.5 855.9,695.5 852.4,696.8 851.2,701.0 848.2,702.8 845.4,702.8 841.1,701.2 842.3,698.6 845.4,696.1 849.4,693.5 852.4,690.4 854.3,687.8 855.7,687.0Z M565.2,613.4 567.3,618.5 568.0,622.4 566.4,625.0 565.4,628.9 564.0,634.0 562.1,640.5 560.3,646.4 557.4,647.7 555.1,648.2 552.7,647.0 551.6,643.1 551.1,639.2 553.4,635.3 553.7,631.5 552.7,627.6 553.9,624.2 557.4,622.9 559.8,621.1 562.1,618.0 564.0,614.7 565.2,613.4Z M249.0,526.0 251.4,523.4 254.9,522.7 259.6,522.9 263.2,524.5 266.7,526.0 270.7,528.1 274.5,530.2 271.4,530.9 266.2,530.9 267.4,529.1 264.3,526.8 259.6,525.5 256.1,524.5 252.6,525.0 250.2,526.0Z M273.8,534.8 277.8,530.9 280.4,531.2 284.4,531.5 288.1,534.3 286.7,534.8 283.2,535.3 280.8,536.6 278.5,535.3 274.0,534.8Z M264.8,535.1 269.5,535.6 267.9,536.4Z M290.9,534.8 294.5,535.1 292.6,536.0Z M309.8,459.4 311.4,457.0 313.8,451.9 317.3,449.0 318.5,451.9 317.3,453.7 320.8,454.4 323.2,457.0 324.4,459.6 323.2,461.9 319.7,461.2 317.3,459.6 313.8,459.4Z M147.1,451.1 153.7,452.6 158.4,457.0 155.3,456.8 151.3,454.4Z M136.0,442.6 139.1,442.8 140.3,447.2 137.9,445.9Z M85.4,432.7 90.1,432.5 90.6,434.0 86.6,435.6Z M570.4,399.9 576.3,399.7 583.3,399.9 579.8,396.3 581.0,392.9 585.7,389.8 592.8,386.7 602.2,384.7 610.4,383.6 604.5,383.4 595.1,385.2 585.7,387.3 579.8,389.8 575.1,392.9 571.6,396.3 570.4,398.4Z M473.9,377.7 482.1,382.1 488.0,384.4 492.7,382.1 499.8,380.0 493.9,378.2 496.2,376.2 484.5,376.2 476.2,376.2Z M491.5,375.1 503.3,374.3 512.7,375.4 505.6,377.4 496.2,376.9Z M555.1,374.1 566.9,373.3 578.6,372.3 590.4,371.0 602.2,373.1 595.1,374.9 581.0,375.1 566.9,375.6Z M663.4,376.7 670.4,374.1 665.7,372.5 677.5,374.1 686.9,377.2 694.0,379.8 684.6,380.8 677.5,378.5 670.4,377.7Z M771.7,388.0 778.7,385.7 788.1,386.5 792.9,387.8 802.3,388.0 797.6,389.3 785.8,388.8 776.4,389.6Z M778.3,392.7 787.0,393.2 783.4,391.4 778.7,391.4Z M869.8,398.6 872.9,397.6 872.9,399.2Z M25.4,397.6 31.3,398.1 30.1,399.2 25.4,399.2Z M295.0,422.4 296.8,418.8 299.2,414.9 304.4,410.3 300.8,407.2 292.6,405.9 289.1,402.5 290.2,400.7 282.0,398.1 273.8,395.5 267.9,394.2 259.6,391.9 256.1,392.2 247.9,391.9 238.5,391.7 237.3,395.0 239.6,397.6 244.3,400.4 250.2,401.5 257.3,401.7 263.2,402.3 266.7,404.6 272.6,405.4 276.1,408.5 278.5,410.5 275.6,413.1 271.4,413.9 265.5,414.1 264.8,415.7 269.1,416.2 273.8,415.7 277.3,416.5 280.8,418.3 284.4,420.3 290.2,421.6 295.0,422.4Z M210.2,403.5 199.6,404.3 190.2,404.6 180.8,404.3 174.9,402.8 172.5,400.2 178.4,397.6 170.2,397.6 171.4,395.0 178.4,392.9 187.8,394.2 194.9,393.2 200.8,393.7 202.0,396.3 209.0,396.3 212.6,398.9 211.4,401.5 210.2,403.5Z M159.6,398.4 153.7,396.3 154.9,392.4 158.4,390.4 166.7,390.1 174.9,392.9 170.2,394.8 165.5,397.6 159.6,398.4Z M173.7,387.3 183.1,389.8 194.9,388.8 200.8,387.3 197.3,385.2 190.2,384.7 180.8,385.2 173.7,386.0Z M209.0,395.0 216.1,397.6 220.8,395.5 220.8,392.4 213.7,391.1 209.0,392.9Z M224.3,395.8 230.2,396.3 236.1,393.7 234.9,391.1 225.5,391.1Z M260.8,389.3 249.0,389.8 232.6,389.3 223.2,387.3 223.2,384.7 232.6,384.7 239.6,386.7 251.4,386.5 260.8,387.0 262.0,388.6Z M260.8,385.2 265.5,383.4 271.4,379.5 277.3,376.9 289.1,373.8 300.8,371.0 303.2,369.2 289.1,367.9 272.6,367.6 256.1,368.4 242.0,370.0 237.3,371.8 244.3,374.3 249.0,377.4 242.0,380.3 244.3,382.9 251.4,384.9 260.8,385.2Z M237.3,380.0 243.2,378.2 239.6,374.9 230.2,372.3 223.2,375.1 229.0,377.7Z M204.3,388.0 218.4,388.0 219.6,385.2 211.4,384.2 204.3,385.5Z M202.0,381.3 213.7,381.3 216.1,378.7 204.3,378.2Z M159.6,386.0 169.0,386.0 176.1,383.4 169.0,382.1 161.9,383.9Z M244.3,418.0 247.9,412.1 251.4,412.1 252.6,413.9 258.5,417.0 260.1,417.8 254.9,417.8 252.6,420.3 247.9,419.0Z M214.9,404.1 220.8,405.4 224.3,404.1 222.0,401.7 217.3,402.0Z M267.9,408.7 271.4,408.5 271.4,406.1 267.9,406.6Z M297.3,453.4 303.2,454.7 303.9,455.5 299.7,455.0Z M297.8,461.7 303.2,462.2 302.0,463.5 298.5,463.0Z M478.6,484.2 485.9,483.6 484.7,487.5 478.6,485.2Z M468.5,476.4 471.7,476.4 472.0,481.1 469.2,481.6Z M469.6,472.3 471.3,471.2 471.5,475.1 469.9,474.9Z M504.5,490.6 511.1,491.1 510.4,491.9 504.7,491.4Z M525.2,491.9 530.4,490.4 529.2,491.9 526.8,492.9Z M454.8,480.0 456.9,479.3 456.7,480.5 455.3,480.8Z M475.0,438.4 478.6,437.7 478.6,439.7 475.8,440.0Z M491.8,434.8 493.9,432.7 493.4,434.3Z M305.1,715.9 311.4,714.9 313.1,715.9 309.1,717.5 305.5,717.2Z M359.2,721.9 364.4,722.7 364.9,724.0 360.9,722.9Z M610.9,709.0 615.1,709.2 614.6,710.8 611.6,710.5Z M81.9,530.2 84.3,531.2 83.1,533.3 81.9,532.0Z M80.3,528.1 81.9,528.4 81.2,529.1Z M76.7,526.5 77.9,527.1 77.2,527.6Z M73.0,525.0 74.1,525.2 73.7,525.8Z M303.4,554.7 305.8,554.4 305.5,556.3 303.4,556.3Z M574.9,549.8 577.5,549.8 576.3,550.6Z M541.4,597.3 542.1,598.4 541.7,598.9Z M579.3,636.4 580.5,636.9 579.8,637.7Z M584.3,634.0 585.2,634.6 584.5,635.3Z M303.2,745.7 306.7,744.1 311.4,742.6 312.6,743.3 307.9,745.1Z M272.6,767.1 280.8,760.7 286.7,761.9 287.9,765.8 284.4,769.7 277.3,769.7Z" fill="#cbb07a" stroke="#2519cf" stroke-width="1.15" stroke-linejoin="round"/>
<path d="M559.8,464.3 564.5,462.7 569.2,461.4 573.9,461.4 573.9,465.3 569.9,465.6 569.2,467.4 567.6,467.9 570.4,470.7 573.2,472.3 573.4,475.9 575.8,476.9 573.9,480.3 575.8,481.8 576.0,486.0 573.9,487.3 570.4,487.5 566.9,486.0 564.5,484.9 564.3,483.1 565.2,480.5 565.7,478.2 567.6,478.2 565.0,475.9 563.3,474.1 561.0,471.2 561.0,468.7 559.3,467.4 559.8,464.3Z M251.4,777.7 260.8,776.4 270.2,776.9 276.8,778.7 279.6,782.6 280.8,791.7 246.7,791.7 247.9,782.6Z M232.6,461.4 239.6,458.3 245.5,458.6 249.5,461.4 244.3,462.2 236.1,461.7Z M242.5,473.8 246.0,473.8 246.2,468.7 249.0,464.0 244.3,464.3 242.5,468.7Z M250.2,463.5 257.3,463.5 260.8,466.6 256.8,470.7 254.9,471.0 252.6,468.7 253.0,465.6Z M253.0,474.3 258.5,474.9 263.2,472.3 263.2,471.5 257.3,472.3Z M261.5,470.5 269.5,470.0 269.1,468.4 263.2,469.2Z M159.6,413.9 166.7,414.4 171.4,411.8 169.0,409.2 161.9,410.5 157.2,411.8Z M173.7,424.7 180.8,424.7 187.8,420.9 191.4,420.1 185.5,422.7 178.4,422.7 173.7,423.4Z M217.3,451.9 222.0,451.9 219.6,443.3 216.1,444.1 218.4,448.0Z M186.7,430.7 192.5,428.6 199.6,429.4 192.5,429.9Z M523.8,583.1 528.0,581.6 529.9,583.6 529.0,588.0 526.4,589.1 524.0,586.2Z M518.1,591.4 519.3,594.0 521.0,599.2 522.1,604.3 521.0,603.8 518.6,597.9 517.7,592.7Z M529.2,606.9 530.6,609.5 531.3,614.7 532.0,619.0 530.6,618.5 529.9,613.4 529.0,609.5Z M693.3,449.3 696.3,449.0 702.2,445.9 706.9,441.5 707.6,438.4 705.8,439.5 702.2,443.3 697.5,446.7Z M586.9,466.1 590.4,462.2 593.9,462.7 592.8,466.1 590.4,469.2 587.6,468.7Z M622.2,464.8 628.1,461.4 635.1,462.2 634.0,463.0 628.1,463.0 624.5,466.1Z M520.2,427.3 523.3,426.5 526.4,425.2 524.5,423.4 521.0,424.2Z M530.4,424.7 533.9,424.2 532.3,420.9 530.4,421.6Z M478.6,431.2 481.6,430.9 481.6,429.4 479.3,429.4Z M480.9,548.8 483.3,548.8 483.3,546.7 480.9,546.7Z M284.4,621.9 286.7,623.2 287.4,625.0 285.1,623.7Z M247.2,551.3 249.0,553.9 249.5,553.4 248.3,550.8Z M279.6,558.6 282.0,558.6 281.5,555.2 280.4,554.4Z" fill="#afdcf0" stroke="#2519cf" stroke-width="0.8" stroke-linejoin="round"/>
<ellipse cx="58.8" cy="442.6" rx="1.6" ry="0.8" fill="#cbb07a" stroke="#2519cf" stroke-width="0.8"/>
<ellipse cx="55.5" cy="443.9" rx="1.6" ry="0.8" fill="#cbb07a" stroke="#2519cf" stroke-width="0.8"/>
<ellipse cx="52.2" cy="444.9" rx="1.6" ry="0.8" fill="#cbb07a" stroke="#2519cf" stroke-width="0.8"/>
<ellipse cx="48.9" cy="445.9" rx="1.6" ry="0.8" fill="#cbb07a" stroke="#2519cf" stroke-width="0.8"/>
<ellipse cx="38.3" cy="447.5" rx="1.6" ry="0.8" fill="#cbb07a" stroke="#2519cf" stroke-width="0.8"/>
<ellipse cx="856.4" cy="445.9" rx="1.6" ry="0.8" fill="#cbb07a" stroke="#2519cf" stroke-width="0.8"/>
<ellipse cx="802.3" cy="463.5" rx="1.6" ry="0.8" fill="#cbb07a" stroke="#2519cf" stroke-width="0.8"/>
<ellipse cx="798.7" cy="465.3" rx="1.6" ry="0.8" fill="#cbb07a" stroke="#2519cf" stroke-width="0.8"/>
<ellipse cx="795.2" cy="466.9" rx="1.6" ry="0.8" fill="#cbb07a" stroke="#2519cf" stroke-width="0.8"/>
<ellipse cx="792.9" cy="468.1" rx="1.6" ry="0.8" fill="#cbb07a" stroke="#2519cf" stroke-width="0.8"/>
<ellipse cx="301.3" cy="536.9" rx="1.6" ry="0.8" fill="#cbb07a" stroke="#2519cf" stroke-width="0.8"/>
<ellipse cx="303.9" cy="540.5" rx="1.6" ry="0.8" fill="#cbb07a" stroke="#2519cf" stroke-width="0.8"/>
<ellipse cx="304.8" cy="542.6" rx="1.6" ry="0.8" fill="#cbb07a" stroke="#2519cf" stroke-width="0.8"/>
<ellipse cx="305.5" cy="544.6" rx="1.6" ry="0.8" fill="#cbb07a" stroke="#2519cf" stroke-width="0.8"/>
<ellipse cx="305.5" cy="546.7" rx="1.6" ry="0.8" fill="#cbb07a" stroke="#2519cf" stroke-width="0.8"/>
<ellipse cx="305.1" cy="548.5" rx="1.6" ry="0.8" fill="#cbb07a" stroke="#2519cf" stroke-width="0.8"/>
<ellipse cx="308.8" cy="548.2" rx="1.6" ry="0.8" fill="#cbb07a" stroke="#2519cf" stroke-width="0.8"/>
<ellipse cx="303.9" cy="551.1" rx="1.6" ry="0.8" fill="#cbb07a" stroke="#2519cf" stroke-width="0.8"/>
<path d="M461.3,430.7 461.6,428.8 460.5,427.3 461.3,425.4 461.2,423.7 461.0,421.1 462.6,419.2 465.2,420.9 465.9,418.6 467.3,417.9 469.9,419.4 470.7,417.2 472.8,417.4 473.8,415.6 475.4,414.9 475.5,412.6 477.7,412.6 479.5,411.5 479.8,409.3 481.4,408.8 482.5,407.6 482.7,404.8 485.2,406.2 486.5,405.0 487.7,403.5 488.9,402.0 491.4,403.8 492.4,402.0 494.0,402.2 495.9,402.3 497.5,401.5 499.4,401.8 500.9,399.9 502.7,400.9 504.2,399.5 506.1,400.8 507.7,400.3 509.3,397.6 511.2,397.9 513.2,398.3 514.6,400.8 516.6,399.7 517.9,400.8 519.7,400.4 521.0,401.5 M277.1,691.2 277.0,693.0 275.3,694.3 275.6,696.2 275.5,697.7 273.9,699.0 271.5,700.3 271.7,702.0 271.5,703.7 273.6,705.5 272.2,707.0 273.1,708.7 273.4,710.0 274.0,711.5 273.9,713.2 271.5,715.5 272.6,717.6 273.9,718.9 275.2,720.1 277.9,719.5 279.2,720.8 280.2,722.8 281.6,724.0 283.0,725.2 284.5,726.0 286.6,723.6 288.3,725.6 289.9,725.8 291.4,725.0 M278.1,693.4 277.3,694.8 276.7,696.3 275.8,697.7 275.9,699.5 274.9,701.0 277.3,703.0 275.7,704.3 274.1,705.7 274.7,707.4 273.8,709.2 276.4,710.4 275.6,712.2 276.6,713.7 276.0,715.5 277.1,716.9 279.6,717.0 280.3,718.7 281.0,720.0 281.9,722.3 283.5,722.4 285.6,721.2 286.7,722.7 M159.1,454.9 158.0,453.9 156.0,453.8 154.3,453.5 152.7,453.4 152.6,450.4 150.7,450.0 149.8,448.2 147.5,448.3 147.4,446.0 144.9,446.0 145.1,443.4 143.7,442.3 141.7,441.7 140.9,440.1 140.0,438.4 137.7,438.8 137.3,436.9 136.7,435.2 134.4,435.8 133.9,433.1 132.1,432.3 130.5,430.5 128.4,431.8 126.6,432.3 125.5,430.4 M152.2,453.5 150.6,452.5 150.5,450.3 148.1,450.1 147.9,447.9 146.4,447.0 144.5,446.7 143.8,444.6 141.6,444.6 140.9,442.7 138.8,442.5 137.7,441.4 137.1,439.8 136.6,437.9 134.2,438.5 133.2,437.3 132.7,435.4 132.1,433.8 130.2,433.8 M119.5,428.3 118.1,426.2 116.3,428.3 114.9,426.7 113.2,428.1 111.7,427.6 110.4,425.5 108.2,427.1 106.7,425.7 104.8,425.7 103.1,425.4 101.3,425.6 99.7,426.7 97.6,425.4 96.6,427.4 94.9,428.2 93.6,429.8 91.6,430.5 89.8,430.8 87.8,430.3 86.8,432.2 85.7,433.6 84.1,434.0 81.8,433.0 81.5,435.9 79.4,435.3 78.3,436.5 76.6,436.4 75.5,437.8 73.7,437.6 72.5,438.7 70.6,438.8 68.7,438.6 67.1,439.8 65.4,440.5 M297.4,426.7 298.7,427.9 300.4,428.8 300.0,431.2 302.9,431.4 302.7,433.6 302.8,435.7 305.5,435.7 305.6,437.7 306.6,439.2 308.8,438.7 309.8,440.2 310.9,441.7 312.7,442.0 313.6,443.8 316.0,444.0 316.8,445.9 M344.6,427.5 345.4,425.8 347.0,424.9 347.1,422.6 350.1,422.9 351.1,421.6 351.5,419.9 350.8,417.5 352.9,417.0 353.5,415.1 355.1,414.1 357.8,416.0 359.5,415.5 359.7,411.3 362.5,413.7 363.7,412.2 365.0,410.8 366.5,410.0 368.5,410.9 369.8,409.6 371.7,409.9 373.1,409.4 374.0,407.0 376.2,409.0 377.9,409.4 379.3,408.9 380.4,407.1 381.3,404.5 382.5,404.0 384.2,403.9 387.0,406.2 387.6,403.2 389.3,402.8 391.7,404.1 392.2,401.4 394.0,401.1 394.8,399.7 394.5,399.4 395.9,396.9 395.9,396.1 395.3,393.0 396.7,392.2 398.3,391.8 398.0,390.4 400.5,389.4 402.4,388.2 402.6,386.2 403.0,384.3 404.9,383.1 403.1,380.2 405.5,379.2 405.5,377.2 406.8,375.6 M387.9,400.8 386.4,400.1 385.1,398.7 383.2,399.3 384.8,398.8 386.5,398.4 387.6,396.8 389.5,397.0 391.2,396.7 393.1,395.1 390.3,395.7 389.1,393.7 M340.8,425.3 339.6,424.2 338.2,423.7 336.2,424.9 334.6,424.8 333.4,423.0 332.0,421.8 332.3,419.1 330.8,418.0 329.4,416.8 328.3,415.6 327.7,414.1 325.2,413.9 325.1,411.9 323.2,410.5 325.8,408.8 322.8,407.1 325.2,406.1 324.4,403.0 327.0,402.2 325.0,402.7 323.7,401.8 322.8,399.7 319.3,400.9 318.6,399.1 320.6,396.1 318.5,395.0 316.4,394.6 318.2,391.4 317.2,390.2 314.3,391.1 313.4,389.3 311.5,389.4 310.4,388.1 309.5,386.4 307.9,386.0 M474.2,377.2 475.0,378.9 476.4,379.6 477.6,380.7 479.7,379.9 481.1,380.7 482.4,381.2 483.8,382.0 484.8,383.8 486.9,382.9 488.0,384.5 489.2,383.0 490.9,382.4 492.7,381.9 494.7,382.4 496.3,381.3 497.6,379.3 499.6,380.6 498.0,380.5 497.1,378.2 495.6,377.9 494.4,378.8 495.6,377.8 496.2,375.5 494.6,375.0 492.9,375.4 491.2,376.8 489.5,375.2 487.8,376.2 486.1,375.5 484.5,376.0 482.8,376.3 481.2,376.5 479.5,376.3 477.9,376.6 476.8,377.0 473.9,377.7 M491.5,374.1 493.2,375.5 494.9,375.3 496.6,375.9 498.2,374.1 499.9,373.9 501.7,375.1 503.3,374.8 504.9,374.0 506.4,375.2 508.0,374.6 509.5,375.8 511.3,374.2 512.9,376.1 510.7,374.9 509.3,376.8 507.6,377.5 505.7,376.7 504.1,377.0 502.5,378.2 500.9,377.1 499.4,376.7 497.8,377.9 496.4,376.6 494.3,377.2 492.9,376.1 491.5,375.1 M555.2,375.3 556.7,372.7 558.5,374.5 560.1,372.9 561.9,374.9 563.4,372.3 565.2,374.4 566.9,373.8 568.6,374.1 570.3,374.3 571.8,372.2 573.5,372.3 575.3,373.1 576.9,371.9 578.6,371.7 580.2,371.4 582.1,372.8 583.8,372.7 585.4,372.3 587.0,370.6 588.8,372.3 590.4,371.0 592.2,370.6 593.8,371.5 595.5,371.7 597.3,371.1 598.8,372.6 600.6,372.4 602.1,372.9 600.1,372.4 598.5,373.6 596.9,374.6 595.1,373.9 593.5,373.6 592.0,374.9 590.4,373.8 588.9,376.2 587.3,375.9 585.7,375.9 584.1,373.9 582.5,374.6 581.0,374.5 579.4,375.7 577.8,375.2 576.2,374.3 574.7,376.4 573.2,376.4 571.6,376.6 570.0,375.6 568.4,374.7 566.9,375.5 565.1,375.7 563.5,375.2 561.7,375.8 560.3,373.6 558.4,374.9 556.7,375.0 555.1,374.1 M663.3,376.3 664.8,376.1 666.1,375.4 667.6,375.0 668.9,374.4 670.6,373.7 668.7,374.2 667.4,372.7 665.9,371.3 667.5,372.2 669.2,372.6 670.9,372.3 672.4,374.0 674.2,373.2 675.7,374.6 677.1,375.2 679.3,374.0 680.3,376.1 682.0,376.4 683.6,376.6 685.7,375.5 687.0,377.1 688.2,378.0 689.9,377.7 691.4,378.1 692.7,378.8 694.1,380.4 692.3,379.2 690.9,380.5 689.3,380.5 687.7,380.1 686.0,379.5 684.4,381.3 682.4,381.3 681.4,378.5 679.5,378.2 677.6,377.7 675.7,378.2 673.9,378.8 672.1,378.8 670.4,378.2 668.7,377.5 666.7,378.3 665.2,376.4 663.4,376.7 M570.4,400.0 572.4,400.6 574.4,400.9 576.3,399.1 578.0,400.4 579.8,400.3 581.6,400.3 582.6,400.6 581.3,399.6 580.8,397.7 580.4,396.5 579.8,394.4 581.0,393.0 582.3,391.5 584.6,391.6 586.2,390.9 587.0,389.0 589.0,389.8 589.5,386.9 591.7,388.1 593.0,387.7 594.1,385.5 596.0,386.6 597.5,385.9 599.3,386.5 600.4,384.3 602.2,384.8 603.9,385.5 605.5,384.6 607.1,383.6 608.6,382.8 610.5,382.5 608.4,383.6 606.5,382.2 604.7,384.3 602.8,382.9 601.2,383.2 599.6,383.2 598.5,385.8 596.7,385.2 595.4,386.3 593.4,384.9 592.1,386.3 590.1,385.1 588.9,386.9 587.1,386.2 585.3,386.4 584.5,388.5 582.7,388.4 580.8,388.1 579.8,389.8 578.4,391.2 577.0,392.4 574.6,392.4 574.5,394.6 572.6,395.0 571.4,396.2 570.3,398.4 570.4,399.9 M771.4,387.3 773.6,387.9 775.1,386.5 776.7,385.5 778.7,385.7 780.3,385.8 781.9,385.9 783.5,386.0 785.1,385.6 786.6,385.7 788.0,387.0 789.8,386.5 791.2,387.8 792.8,388.5 794.4,388.8 796.0,389.0 797.6,387.2 799.2,387.3 800.7,388.6 802.2,387.8 800.9,389.2 799.0,388.5 797.6,388.4 795.9,388.4 794.2,389.9 792.5,389.6 790.8,390.3 789.2,387.7 787.4,389.6 785.7,388.2 784.2,388.8 782.6,388.8 781.1,389.1 779.4,388.5 777.9,389.2 776.2,390.1 774.5,390.0 773.2,388.6 771.7,388.0 M295.5,422.7 296.8,421.0 296.9,418.8 297.7,417.5 298.1,416.0 300.3,416.2 300.0,413.2 301.0,411.7 302.5,410.8 303.8,410.9 302.8,409.7 301.5,408.8 300.6,408.5 299.1,407.5 297.4,407.3 295.9,406.2 294.1,407.1 291.6,406.9 290.7,405.5 290.3,403.5 288.7,402.3 290.5,399.9 288.9,399.2 286.9,399.9 284.9,400.5 283.9,397.9 282.3,397.3 280.3,397.9 278.9,396.6 276.9,397.2 275.8,394.7 274.0,394.4 272.5,394.2 271.2,393.4 269.2,395.5 267.9,394.1 266.4,393.0 264.9,392.3 262.8,393.2 261.0,393.6 259.6,391.5 258.0,393.4 256.1,391.5 254.4,393.8 252.8,392.2 251.2,392.1 249.5,393.3 247.9,392.0 246.3,391.9 244.7,392.3 243.2,390.4 241.6,390.5 240.1,390.4 239.3,391.9 239.4,393.9 237.6,394.7 239.4,395.4 239.3,398.2 241.6,397.9 243.4,398.4 244.5,399.7 246.4,400.5 248.1,401.9 250.2,401.3 252.0,400.9 253.7,402.2 255.6,400.1 257.4,400.7 259.2,402.5 261.1,402.9 263.9,401.1 265.7,402.2 266.7,404.6 268.6,405.4 270.8,403.5 272.7,405.2 274.3,405.8 275.9,406.4 276.9,407.6 277.8,408.9 278.5,410.6 278.0,412.8 275.6,412.7 273.3,412.2 271.4,413.3 269.5,415.4 267.5,413.5 265.1,413.9 265.0,414.0 267.0,415.6 269.1,416.7 270.8,417.6 272.4,417.3 273.7,415.9 275.5,416.4 276.6,417.9 279.5,416.5 280.8,418.3 283.3,418.0 284.2,421.3 285.7,421.2 287.5,420.0 289.0,420.3 290.2,421.7 291.7,422.7 293.6,420.9 295.0,422.4 295.0,422.4 M210.1,402.2 208.6,403.0 207.1,402.9 205.6,402.5 204.2,404.8 202.6,403.6 201.0,402.8 199.6,403.1 198.0,404.1 196.5,405.5 194.9,404.7 193.3,402.8 191.8,405.9 190.2,405.2 188.7,403.0 187.0,404.7 185.5,405.4 183.9,405.0 182.4,403.0 180.6,404.9 179.2,404.2 177.9,403.1 176.6,402.2 174.9,402.8 172.7,402.4 172.6,400.4 173.4,398.1 174.9,397.6 176.5,397.3 178.4,396.9 176.8,398.3 175.1,397.0 173.5,398.7 171.8,398.9 168.7,396.9 171.6,395.7 173.5,395.7 174.6,393.1 176.4,392.6 178.6,391.3 179.9,393.7 181.7,392.7 183.3,392.4 184.6,394.3 186.2,394.4 187.8,394.1 189.4,392.8 191.4,394.2 193.2,393.7 194.9,393.0 197.0,392.2 198.7,395.0 199.7,394.2 202.0,397.0 203.7,398.0 205.5,396.6 207.3,395.8 209.8,395.3 210.6,397.9 212.5,398.9 211.6,401.6 210.2,403.5 210.2,403.5 M159.2,399.5 158.3,397.2 156.8,396.9 155.1,396.9 152.8,396.0 155.2,394.7 155.4,393.3 156.7,391.4 158.4,390.4 160.0,389.4 161.7,388.6 163.3,389.8 165.0,390.4 167.1,388.7 168.0,391.6 170.2,390.4 171.9,391.0 173.7,390.9 174.3,391.4 173.0,392.8 171.3,393.0 170.0,394.4 169.4,397.1 167.3,397.2 165.5,397.6 163.7,399.2 161.3,396.6 159.6,398.4 159.6,398.4 M173.3,388.8 175.6,386.5 177.3,386.6 178.0,390.2 180.3,388.0 181.9,388.2 183.2,390.4 184.8,389.2 186.6,390.9 188.1,388.5 190.0,390.8 191.5,388.5 193.2,389.3 195.3,390.2 196.5,389.0 198.2,389.4 199.5,388.3 200.0,388.6 199.7,385.1 197.3,384.9 195.4,385.7 193.6,386.0 192.0,383.6 190.2,384.4 188.5,383.3 187.0,383.9 185.4,383.4 183.9,384.8 182.3,384.4 180.7,384.8 179.1,386.2 177.1,384.0 175.5,386.4 172.8,386.0 173.7,387.3 M208.5,396.4 209.9,397.0 211.4,397.3 213.7,395.2 214.6,397.4 216.0,397.4 217.7,397.0 218.7,395.1 219.7,395.5 220.6,394.0 220.6,393.4 219.0,392.3 217.0,393.4 215.2,392.8 213.5,390.5 212.3,392.0 210.6,392.3 208.2,392.9 209.0,395.0 M224.3,396.5 226.2,397.1 228.3,395.1 230.9,397.9 231.3,394.7 233.4,395.5 234.1,393.1 236.9,393.4 234.9,392.3 233.4,390.4 231.8,390.4 230.2,390.2 228.6,391.3 227.1,389.9 223.9,390.7 226.4,393.0 224.7,394.2 224.3,395.8 M260.8,389.7 259.1,388.0 257.4,388.3 255.8,390.5 254.0,388.4 252.4,389.2 250.8,391.3 249.1,388.3 247.4,390.6 245.7,390.4 244.1,390.0 242.5,389.3 240.8,390.9 239.2,388.9 237.5,388.4 235.9,389.4 234.2,388.4 232.7,388.9 231.2,387.9 229.2,389.7 227.8,388.8 226.3,388.1 224.4,388.9 224.8,387.3 223.2,385.1 224.7,383.3 226.3,385.0 227.9,384.4 229.4,383.6 231.0,383.5 232.6,384.6 234.7,383.8 236.0,385.9 237.8,386.3 239.6,385.5 241.3,388.0 243.0,385.1 244.6,385.5 246.4,387.7 248.0,385.6 249.7,386.3 251.4,386.7 253.0,386.4 254.5,386.6 256.1,386.8 257.7,386.8 259.3,385.4 260.0,387.7 262.4,389.2 260.8,389.3 M261.1,386.0 262.0,383.7 263.6,383.1 265.7,383.7 266.2,381.2 269.0,382.2 270.4,381.2 270.8,378.1 273.1,379.4 274.4,378.2 276.0,378.0 277.7,378.4 279.2,378.1 280.2,375.9 282.0,376.9 283.4,376.3 285.1,376.5 285.7,373.1 288.0,375.7 288.8,372.9 290.2,372.2 292.1,373.4 293.8,373.9 295.3,373.9 296.3,371.6 298.2,372.8 299.0,369.8 301.8,372.2 303.1,369.9 301.6,368.9 299.9,370.2 298.3,370.3 296.8,370.3 295.4,368.1 293.8,368.1 292.3,367.1 290.7,366.8 289.1,368.1 287.4,366.7 285.8,368.8 284.1,366.5 282.5,368.6 280.9,366.3 279.2,368.1 277.5,367.9 275.9,367.6 274.2,369.2 272.7,369.1 270.9,367.6 269.3,367.1 267.7,369.4 266.0,368.3 264.4,368.5 262.7,367.1 261.0,366.5 259.5,369.6 257.7,368.2 256.3,369.7 254.4,367.6 252.8,367.3 251.3,368.2 249.8,368.8 248.4,370.8 246.8,370.8 245.2,370.5 243.7,371.2 242.4,371.1 239.9,369.1 239.0,371.6 236.8,373.1 238.4,373.1 239.8,373.7 241.0,374.6 242.7,374.5 244.6,373.9 246.0,375.3 247.7,376.1 249.6,378.9 248.2,379.5 246.1,378.4 244.8,379.1 242.8,378.2 241.7,380.6 242.4,382.3 244.4,382.8 246.0,383.7 247.6,384.9 250.1,382.9 251.4,383.3 253.0,384.7 254.6,384.3 256.1,384.8 257.7,383.6 259.3,384.0 260.8,385.2 260.8,385.2 M237.4,380.5 238.9,380.2 240.7,380.6 241.4,377.7 242.1,379.3 242.7,376.3 240.4,376.4 239.5,375.3 238.3,373.4 236.2,375.0 235.3,372.2 233.3,373.2 231.4,374.1 229.7,371.0 228.7,372.6 227.9,374.7 225.5,372.9 224.2,373.7 222.8,375.9 224.4,376.3 225.4,377.9 228.2,375.5 228.6,379.3 230.6,378.6 232.6,377.8 233.9,379.5 235.8,379.0 237.3,380.0 M204.3,386.7 205.9,386.8 207.5,388.4 209.0,386.9 210.6,386.8 212.2,387.9 213.7,387.8 215.3,387.1 216.9,387.7 219.5,388.5 217.9,386.1 219.5,386.3 217.8,386.6 216.2,385.7 214.5,385.9 213.2,382.7 211.5,384.8 209.3,382.9 208.1,386.0 205.8,383.8 204.3,385.5 204.3,388.0 M202.0,381.5 203.6,380.8 205.3,382.5 207.0,380.6 208.7,381.4 210.4,380.8 212.1,381.0 214.9,382.4 213.9,379.1 216.1,378.9 214.4,379.6 212.7,379.1 211.1,376.8 209.3,379.0 207.7,378.0 206.0,378.6 203.7,377.7 203.3,379.9 202.0,381.3 M159.6,386.1 161.2,385.3 162.7,384.4 164.3,386.5 165.9,385.0 167.4,385.1 168.9,385.6 170.6,385.9 172.4,386.5 173.2,384.3 175.2,385.5 176.4,381.7 174.1,383.9 172.3,384.2 170.6,383.6 168.7,381.0 167.2,382.2 165.1,381.6 163.3,381.9 161.6,383.5 160.7,384.8 159.6,386.0 M242.9,417.2 244.1,415.9 245.8,414.9 247.5,413.9 247.9,410.8 249.6,410.8 252.2,411.6 252.2,414.7 254.6,413.6 255.1,416.2 256.7,416.7 259.0,415.9 260.1,417.6 258.4,417.9 256.7,418.1 253.7,416.6 254.8,420.0 252.1,421.9 251.4,418.5 249.4,419.8 247.6,420.0 245.9,419.1 244.3,418.0 M215.2,402.7 216.6,403.4 218.0,404.1 219.0,406.4 220.8,405.3 222.8,405.4 223.4,405.0 223.2,402.9 221.9,400.6 220.4,401.7 218.8,400.4 216.4,401.0 216.4,403.4 214.9,404.1 M154.9,401.7 156.4,401.5 158.0,401.8 159.1,399.9 160.9,400.6 162.5,401.0 164.0,400.7 165.0,398.3 166.8,399.3 168.3,398.7 169.8,397.9 171.8,398.7 173.0,396.9 174.4,396.2 176.4,397.1 177.7,395.8 179.1,394.5 180.6,394.1 182.3,394.3 183.6,392.6 185.6,393.9 187.2,393.9 188.6,392.6 190.3,393.5 191.9,393.5 193.4,392.2 195.0,392.4 196.3,390.5 197.9,390.1 199.8,392.7 201.1,390.4 202.6,390.0 204.4,391.8 205.9,391.3 207.4,389.4 209.0,389.9 210.6,389.6 212.1,389.7 213.7,388.8 215.3,390.3 216.9,389.6 218.4,389.8 220.0,389.2 221.6,389.0 223.2,388.8 224.7,391.3 226.3,391.0 227.9,390.5 229.4,389.2 231.0,389.3 232.6,389.2 234.1,389.8 235.7,389.1 237.3,389.8 238.9,389.6 240.4,389.6 242.0,391.0 243.6,390.4 245.1,390.5 246.7,390.2 248.3,390.7 249.8,391.5 251.4,390.0 253.0,389.3 254.5,390.6 256.1,390.3 257.7,391.5 259.2,389.5 260.8,390.6 M223.2,405.4 224.2,404.2 225.6,403.3 226.5,402.1 227.3,400.8 226.7,398.7 229.0,396.9 226.9,396.4 225.8,395.3 224.5,394.4 224.7,392.4 223.0,391.7 222.7,389.3 224.5,389.1 226.0,388.6 227.2,387.5 227.5,384.8 229.1,384.3 230.8,384.4 232.6,384.8 234.4,385.2 235.9,384.7 237.6,384.6 238.9,383.2 240.5,382.9 241.8,381.5 243.4,381.1 244.9,380.4 246.7,380.8 M242.0,404.2 243.9,404.3 245.6,404.0 247.4,404.0 249.0,402.3 251.0,403.6 252.6,402.4 254.4,402.6 256.4,402.3 258.2,401.7 259.0,399.4 260.6,398.6 262.3,398.3 263.3,397.1 264.7,396.4 265.5,395.0 M131.2,403.1 133.2,404.4 134.7,404.0 136.3,403.6 137.8,402.9 139.4,402.8 140.7,400.2 142.5,401.7 144.2,400.6 146.1,401.7 147.9,400.8 149.5,401.5 151.3,401.8 153.1,402.3 154.9,403.4 156.5,403.7 158.0,402.0 159.6,403.2 161.2,403.3 162.7,402.0 164.5,401.3 165.9,402.6 167.3,403.6 169.0,403.3 170.7,402.8 172.0,404.5 173.8,403.9 175.2,405.8 177.5,404.5 178.9,406.1 180.8,406.1 182.3,407.7 184.0,405.6 185.4,407.6 187.1,406.5 188.6,406.5 190.1,406.2 191.8,406.7 193.5,407.6 195.1,407.5 196.6,407.2 198.1,406.1 199.7,404.9 201.2,405.9 202.7,406.5 204.4,405.9 205.7,407.9 207.6,405.8 209.0,406.5 210.6,406.3 212.1,406.2 213.7,405.9 215.3,406.3 216.9,406.6 218.9,408.0 220.0,406.4 221.5,406.0 222.7,404.8 223.5,404.3 225.1,402.9 226.1,401.3 225.1,399.0 226.5,397.9 228.5,398.0 229.2,400.0 231.1,400.2 232.9,400.8 234.0,401.6 235.2,403.7 237.0,403.5 239.0,402.9 240.0,405.4 241.8,404.3 243.3,403.8 244.5,402.7 246.2,403.0 247.8,403.2 249.2,404.4 251.1,403.2 252.6,404.1 254.4,403.3 255.6,405.2 257.3,405.1 M437.0,430.9 437.4,433.2 435.2,433.7 433.7,436.8 436.0,438.9 M314.8,745.2 313.3,746.4 311.2,745.9 310.1,748.7 307.6,747.1 306.7,748.8 304.9,748.6 304.1,750.7 302.5,750.7 301.2,751.6 299.7,752.1 297.7,751.4 296.6,752.9 294.5,752.0 293.6,753.9 292.9,756.0 290.6,755.8 289.3,757.0 288.8,758.9 286.6,759.3 286.8,761.8 284.7,762.2 283.1,763.2 281.7,764.4 280.0,765.4 280.2,767.5 280.0,770.9 278.1,769.6 276.7,770.7 274.8,769.2 273.1,769.0 272.1,772.1 270.2,771.0 M303.1,744.2 304.9,744.1 306.6,743.4 308.5,743.3 310.3,743.2 312.1,742.9 313.7,741.8 315.5,741.5 317.3,741.3 M251.4,772.9 252.7,774.6 254.9,772.3 256.3,773.4 257.4,775.9 259.1,775.3 261.0,774.0 262.5,774.9 263.7,776.9 265.6,775.8 267.4,774.8 268.4,777.9 270.7,775.8 271.5,777.9 272.9,778.4 274.5,778.5 275.3,780.6 277.7,778.8 278.6,780.7 280.6,779.8 281.0,782.9 283.4,781.0 284.3,782.7 285.6,784.1 287.2,784.7 289.4,782.7 290.3,785.5 291.9,785.8 293.9,784.6 295.2,786.3 297.1,785.0 298.7,785.2 300.3,785.5 301.8,786.3 303.2,787.3 M258.6,779.7 260.3,779.8 261.9,780.2 262.8,782.9 264.7,782.5 266.1,783.4 267.8,783.5 269.4,783.4 270.6,784.8 272.2,784.8 273.5,785.8 275.1,785.8 276.4,786.7 278.2,785.9 279.8,785.5 281.4,785.7 282.7,787.7 284.5,786.3 285.9,788.0 287.4,788.1 289.1,788.0 M272.8,767.3 273.4,765.4 275.1,764.8 276.4,763.7 278.4,763.5 279.7,762.4 280.6,761.9 282.6,760.9 283.8,762.1 285.6,761.8 287.3,763.2 286.7,764.8 287.7,766.3 286.9,768.5 284.9,768.1 283.2,768.8 281.6,770.0 279.6,770.0 M733.7,533.7 733.8,536.2 736.1,536.5 736.9,538.4 736.1,540.0 735.5,541.5 736.1,543.3 735.7,544.9 737.7,544.8 738.5,546.7 739.9,547.5 740.4,549.4 742.2,550.1 742.9,551.8 744.8,552.7 745.2,554.9 743.3,557.4 744.0,558.9 745.7,559.9 747.0,561.1 746.7,563.0 745.7,564.9 744.6,566.9 M730.3,553.8 731.7,552.7 733.5,552.0 734.8,549.7 735.4,551.5 736.7,553.0 736.7,554.3 738.6,554.7 740.8,556.3 740.2,558.2 739.4,560.2 741.1,561.7 M748.6,577.0 748.9,578.9 750.6,580.2 750.9,582.4 751.5,584.1 751.7,585.8 750.8,587.1 752.3,588.0 753.2,589.4 754.0,591.5 755.8,589.8 757.5,590.9 M736.3,585.2 738.1,584.4 739.8,584.5 738.3,585.1 737.9,587.0 736.3,587.5 736.8,589.5 736.7,591.7 739.0,593.1 738.7,595.3 M504.7,483.9 506.3,485.1 508.0,486.1 509.8,486.1 511.5,486.8 512.7,488.0 M505.7,489.4 505.9,487.4 507.8,486.3 508.0,484.3 509.9,483.3 510.4,480.8 M509.9,422.5 511.8,422.4 513.0,420.9 514.8,421.4 516.8,421.8 519.1,423.6 517.4,424.6 515.1,424.7 M232.6,461.4 234.0,460.6 235.8,460.6 237.1,459.5 238.8,459.3 240.6,459.6 242.2,457.7 243.5,458.6 244.7,459.6 246.4,459.3 247.8,459.9 248.6,461.1 250.2,463.5 M309.3,459.0 311.4,457.0 311.5,455.0 313.7,453.9 313.4,451.4 315.0,451.0 316.8,450.8 317.5,448.9 316.9,450.9 318.0,451.6 317.3,453.8 319.0,454.4 320.7,454.6 322.3,455.5 322.1,457.5 324.6,459.7 323.5,460.8 321.6,460.7 319.0,462.1 317.3,460.2 315.5,459.5 313.8,458.6 311.8,460.1 309.8,459.4 M755.8,398.3 753.5,398.3 753.1,396.3 751.6,395.4 750.7,393.5 748.7,394.0 747.1,392.6 745.0,393.5 743.3,391.6 741.7,392.9 740.0,393.6 738.2,393.7 736.4,393.5 734.7,394.4 733.2,393.6 731.6,394.1 730.0,393.8 728.4,393.5 726.9,393.2 725.4,392.9 724.0,391.9 722.4,392.4 721.0,391.5 719.4,391.2 717.9,391.1 716.5,390.9 714.4,391.2 712.5,390.7 710.9,391.1 711.7,389.6 712.4,388.1 714.0,387.6 715.2,386.4 713.6,386.7 712.1,386.6 710.6,386.1 709.4,384.8 707.9,384.3 706.4,384.3 704.8,384.4 703.2,384.7 701.6,384.4 700.3,382.9 698.7,382.8 697.1,382.6 695.4,382.8 694.0,381.8 M613.8,393.6 612.3,394.2 611.6,395.7 610.2,396.3 608.5,397.3 608.4,399.3 607.3,400.9 606.6,403.1 608.3,404.6 610.4,405.4 M263.8,514.0 266.0,514.0 266.6,515.7 266.4,517.4 265.6,519.9 267.5,519.4 268.9,520.2 270.1,521.0 271.6,521.7 272.0,523.5 273.2,524.7 274.6,525.8 276.1,526.8 M77.1,782.1 78.9,783.7 80.5,782.0 82.3,783.0 84.0,783.1 85.6,782.8 87.3,781.8 88.9,781.8 90.6,782.3 92.2,782.6 93.7,781.8 95.3,781.3 96.8,780.8 98.3,780.6 100.2,780.8 101.9,779.9 103.7,779.7 105.4,779.3 M147.9,774.3 149.4,773.5 151.0,773.3 152.5,773.2 154.1,773.5 155.7,773.7 157.2,772.7 158.8,772.4 160.4,772.7 162.0,772.2 163.5,773.2 165.1,773.8 166.7,773.1 M204.2,770.3 205.9,770.8 207.3,769.6 209.0,770.1 210.7,770.5 212.1,769.2 213.7,769.9 215.3,769.4 216.9,769.9 218.5,768.5 220.0,769.7 221.6,769.4 223.2,769.4" fill="none" stroke="#2519cf" stroke-width="0.8" stroke-linejoin="round" opacity="0.9"/>
<path d="M117.2,402.5 117.2,426.5 121.9,427.3 125.5,430.2 130.2,428.1 134.9,431.2 138.4,435.1 143.1,437.7 143.1,440.2 M159.6,455.7 225.0,455.7 230.2,456.8 237.3,458.1 240.8,457.5 249.5,461.2 251.4,462.7 254.9,465.3 255.2,471.2 253.5,473.3 254.9,474.6 263.2,471.8 262.9,470.2 268.3,469.7 272.6,466.1 280.8,466.1 283.2,464.3 286.2,459.9 289.1,460.1 289.5,464.0 291.4,466.1 M173.5,498.4 179.1,497.9 187.8,501.5 194.4,501.5 194.4,500.2 198.4,500.2 203.1,505.9 206.7,507.4 207.8,505.4 211.4,506.1 214.9,511.3 220.3,515.4 M121.9,427.3 226.0,427.3 M166.7,427.3 166.7,443.3 171.4,447.5 176.1,451.1 180.8,455.7 M190.2,427.3 190.2,455.7 M209.0,427.3 210.2,455.7 M225.0,455.7 225.0,445.9 239.6,435.3 M262.0,449.3 262.0,460.9 267.9,464.8 273.8,466.1 M314.7,449.5 298.5,448.0 291.4,440.2 297.3,426.5 M127.8,404.3 133.7,409.2 143.1,417.0 150.2,424.7 157.2,427.3 M209.0,427.3 209.0,416.5 185.5,414.4 165.5,405.9 M190.2,401.5 190.2,380.8 M157.2,463.0 169.0,463.5 173.7,463.5 M156.8,473.8 187.8,473.8 M173.7,455.7 173.7,473.8 M176.1,455.7 176.1,459.1 179.8,464.8 183.1,467.4 187.8,467.4 187.8,476.4 M187.8,466.1 204.3,466.1 M204.3,455.7 204.3,476.4 M187.8,476.4 209.0,476.4 M192.5,476.4 192.5,501.5 M180.8,473.8 180.8,486.7 179.4,491.9 179.1,497.9 M180.8,486.7 226.4,486.7 M166.7,473.8 166.7,481.6 179.4,491.9 M209.0,476.4 209.0,486.7 M206.7,486.7 206.7,499.7 198.4,499.7 M204.3,463.5 222.0,463.5 M204.3,471.2 222.0,471.2 222.0,472.5 M209.0,479.0 224.8,479.0 M206.7,488.0 213.7,488.0 213.7,493.2 220.8,494.8 226.7,495.5 M220.3,455.7 222.0,463.5 222.0,470.0 223.6,477.4 226.4,481.3 226.4,488.0 226.7,495.5 227.9,497.1 228.3,504.8 M222.0,470.0 234.4,470.0 M223.6,477.4 233.7,477.4 M226.4,488.0 237.3,488.0 M227.9,497.1 234.4,497.1 M232.6,461.7 230.7,464.8 234.4,470.0 236.8,474.3 234.0,478.0 236.8,482.1 239.2,486.7 237.3,491.9 234.4,497.1 233.7,502.3 238.0,502.3 238.2,504.3 M235.9,472.5 242.5,472.5 M243.2,474.6 243.2,481.6 242.0,484.7 M249.5,474.6 249.5,481.3 M242.0,484.7 246.7,484.2 249.5,481.3 254.7,483.1 259.6,477.4 M244.3,474.6 252.6,474.6 M259.6,473.8 259.6,479.8 270.7,479.8 M261.3,473.8 271.9,473.8 273.3,475.4 M238.5,488.0 256.8,487.8 270.5,487.9 M236.6,491.9 253.5,491.9 M241.5,491.9 241.0,503.8 M247.6,491.9 249.0,499.7 249.0,502.3 M243.2,502.3 249.0,502.3 249.3,503.0 256.1,503.3 257.3,503.0 M253.5,491.9 258.5,499.7 M253.5,491.9 258.5,491.7 264.3,494.8 M259.6,479.8 262.0,481.1 266.2,480.8 264.8,482.9 260.1,485.5 256.8,487.8 254.7,483.1 M276.6,466.1 276.6,472.0 276.1,476.4 M280.8,466.1 278.5,472.0 280.1,475.6 M276.6,472.0 282.0,472.0 M282.0,465.3 282.5,471.2 M232.1,544.6 234.9,541.0 236.1,541.0 234.9,537.9 239.2,536.4 241.3,534.6 M239.2,536.4 239.2,541.3 M241.3,541.8 238.9,544.9 237.0,546.7 M238.9,544.9 242.5,547.7 M243.6,548.8 246.7,546.7 253.3,543.6 M247.4,553.7 252.1,554.2 M254.0,561.4 254.7,557.8 M280.4,531.5 280.4,536.4 M281.3,550.3 278.5,553.9 278.9,559.1 279.6,563.0 284.4,564.3 290.2,566.3 289.5,572.0 291.4,579.3 M291.4,579.3 284.4,581.1 285.5,584.9 284.4,593.2 M284.4,593.2 279.6,588.8 274.9,584.9 271.9,582.6 M271.9,582.6 267.9,581.6 263.6,578.7 M271.9,582.6 271.4,586.2 265.5,590.6 263.2,595.3 260.1,593.7 260.1,591.1 M284.4,593.2 277.3,595.3 274.9,601.2 278.5,606.9 283.2,606.9 283.2,610.8 285.5,610.8 M285.5,610.8 286.7,614.7 286.7,621.1 285.5,627.6 283.4,629.6 M285.5,627.6 287.9,632.7 288.6,637.9 290.9,641.3 M285.5,610.8 289.1,610.8 295.4,607.7 295.4,612.1 300.8,614.9 306.7,617.8 307.9,624.2 311.9,624.5 312.6,627.6 313.3,631.5 312.1,634.3 M312.1,634.3 310.0,632.2 303.7,633.3 301.8,639.7 M301.8,639.7 297.3,640.0 293.3,638.7 290.9,641.3 M312.1,634.3 313.1,639.5 318.0,640.0 320.6,644.4 320.6,648.5 M301.8,639.7 305.5,643.9 312.6,647.5 313.5,652.9 317.3,652.9 320.6,648.5 M320.6,648.5 322.5,652.4 317.8,655.5 313.5,660.4 M313.5,660.4 318.3,662.2 323.2,666.3 323.4,669.4 M313.5,660.4 312.1,666.3 311.7,670.2 M290.9,641.3 287.9,645.7 288.4,652.1 284.8,659.9 283.7,667.6 284.4,672.8 282.0,679.3 280.8,685.7 280.1,693.5 280.8,699.9 278.5,707.7 277.3,712.8 279.6,716.7 288.1,717.5 M287.7,718.5 287.7,724.2 M291.4,579.3 295.0,580.3 298.5,577.2 298.5,572.0 305.5,570.7 306.3,568.9 M306.3,568.9 304.8,566.9 307.9,560.4 M306.3,568.9 308.4,570.7 309.1,577.2 312.6,578.5 316.1,577.4 M314.5,566.9 312.6,572.0 316.1,577.4 M322.0,567.4 320.8,576.4 M316.1,577.4 320.8,576.4 325.6,576.7 327.4,572.0 M444.4,491.7 445.6,498.4 440.9,502.3 436.2,505.4 428.7,508.2 428.7,511.8 M418.1,510.8 428.7,510.8 M428.7,511.8 428.7,515.2 420.9,515.2 420.9,521.6 418.5,522.9 418.5,527.3 409.1,527.3 M428.7,511.8 437.8,517.8 452.0,527.8 456.7,532.0 459.0,533.0 M437.8,517.8 433.8,517.8 436.2,542.3 422.1,542.3 420.4,544.1 M410.3,541.0 415.0,539.5 420.4,544.1 M420.4,544.1 422.3,550.3 M409.6,547.5 416.2,547.2 M422.3,550.3 416.9,549.8 413.8,554.2 M409.8,550.6 416.9,549.8 M422.3,550.3 430.3,555.7 429.1,562.7 M417.8,559.1 424.0,556.5 424.9,560.4 422.1,564.5 M424.9,560.4 429.1,562.7 431.5,571.0 M430.3,555.7 436.2,555.5 442.6,557.8 441.9,569.2 M442.6,557.8 442.3,553.9 449.1,553.7 450.8,566.6 M449.1,553.7 452.9,559.1 452.9,566.3 M455.5,565.8 457.6,552.1 M451.3,553.9 457.6,552.1 M436.2,555.5 439.7,547.7 448.0,543.6 449.6,543.6 M449.6,543.6 454.3,550.3 451.3,553.9 M459.0,533.0 459.0,541.0 449.6,543.6 M457.6,552.1 458.6,547.5 465.6,548.8 472.7,548.0 481.2,547.0 M459.0,533.0 463.3,531.2 477.4,521.6 M477.4,521.6 484.5,522.9 M484.5,522.9 485.6,528.1 485.6,538.9 481.2,547.0 M477.4,521.6 471.5,514.4 472.2,504.8 470.6,504.1 M470.6,504.1 466.8,495.3 468.9,487.0 M470.6,504.1 476.2,496.8 M484.5,522.9 505.6,532.0 M508.0,500.4 508.0,525.5 M505.6,532.0 505.6,530.7 508.0,530.7 508.0,525.5 M508.0,525.5 536.0,525.5 M505.6,532.0 505.6,541.8 502.1,546.2 500.9,549.5 502.8,553.9 M502.8,553.9 493.9,559.1 485.6,563.0 M485.6,563.0 482.1,556.5 484.5,553.9 482.6,549.3 481.2,547.0 M482.6,549.3 479.8,556.5 476.2,564.3 470.3,568.1 469.4,570.2 M472.2,576.4 480.5,576.7 486.8,576.7 M485.6,563.0 483.3,568.1 486.8,576.7 M472.2,579.8 475.8,579.8 475.8,576.7 M486.8,576.7 492.9,573.3 492.7,570.7 502.1,571.8 513.7,569.2 M502.8,553.9 505.6,559.9 513.7,569.2 M505.6,559.9 510.4,556.5 517.4,557.0 524.5,551.3 527.3,554.7 529.4,557.8 M529.4,557.8 531.5,552.6 534.8,544.9 536.3,538.4 540.0,535.8 M534.8,544.9 543.3,544.9 549.0,550.1 M529.4,557.8 526.8,561.7 531.5,568.1 533.9,571.0 542.1,573.6 545.7,572.0 548.0,571.5 M548.0,571.5 555.1,569.4 562.1,561.7 559.8,561.7 550.4,558.1 549.7,553.9 M549.0,550.1 547.6,553.9 549.7,553.9 550.8,552.6 M548.0,571.5 545.7,575.1 545.7,584.9 547.1,586.7 M531.5,568.1 529.2,571.5 530.4,579.8 529.2,584.9 M529.2,584.9 537.7,590.1 541.4,594.5 M521.9,573.3 522.8,576.7 519.1,581.1 518.8,586.0 M513.7,569.2 518.6,571.0 521.9,573.3 529.2,571.5 M518.8,586.0 521.0,585.2 521.7,588.6 520.7,593.7 518.4,593.7 517.9,589.1 518.8,586.0 M517.9,589.1 521.7,588.6 M521.0,585.2 523.8,584.9 M544.5,609.5 538.6,611.6 531.5,612.1 530.6,612.1 M522.1,604.3 526.6,606.6 529.2,606.9 M522.1,604.3 516.2,604.1 516.2,609.5 516.7,613.4 519.3,613.9 519.3,617.0 515.1,615.9 512.7,613.4 505.6,610.8 505.6,615.9 500.9,615.9 M477.9,597.3 479.8,597.6 488.0,597.6 489.2,601.7 495.1,601.7 496.2,600.4 500.9,601.7 500.9,610.8 505.6,610.8 M477.9,595.0 479.8,594.2 485.2,593.5 487.3,587.5 491.1,583.6 492.9,573.3 M475.5,592.4 476.9,588.3 483.0,587.5 483.3,583.9 482.1,578.7 480.5,576.7 M476.9,627.1 482.1,627.3 492.7,627.3 504.5,627.8 508.5,628.4 M500.9,615.9 500.9,624.2 504.5,627.8 M498.6,628.9 498.6,639.2 496.2,639.2 496.2,646.4 496.2,656.0 M488.0,656.3 496.2,656.0 M496.2,646.4 500.9,651.1 505.6,648.8 510.4,646.2 512.7,643.3 518.4,639.7 M508.5,628.4 510.4,633.5 514.4,636.6 518.4,639.7 M508.5,628.4 512.7,628.9 517.4,623.7 520.7,622.7 M520.7,622.7 526.6,625.5 526.4,632.7 525.4,637.4 522.8,640.2 M518.4,639.7 522.8,640.2 M522.8,640.2 524.5,645.7 524.5,651.6 526.6,651.9 M520.7,622.7 520.2,620.6 527.3,618.5 526.6,610.8 527.5,607.2 M527.3,618.5 530.4,619.8 533.4,624.2 532.0,626.3 529.9,622.9 M512.7,658.8 516.2,656.5 518.4,658.6 515.5,661.4 512.7,658.8 M522.1,649.0 524.5,649.5 524.2,652.6 522.1,652.1 522.1,649.0 M529.7,501.5 531.3,506.1 M475.5,429.9 478.1,427.3 477.9,423.4 477.9,419.6 482.1,415.7 484.5,411.3 488.0,407.9 491.5,405.4 497.4,404.1 M497.4,404.1 504.5,404.8 509.9,402.8 515.1,401.5 517.4,403.5 521.7,402.5 M497.4,404.1 504.5,407.2 505.6,411.8 506.1,412.3 M517.4,403.5 516.2,405.4 519.8,407.9 517.9,410.5 519.8,413.1 519.8,417.0 523.3,419.8 517.4,424.7 514.6,426.0 M515.1,428.3 513.9,433.5 515.5,437.1 511.8,438.4 509.2,442.0 504.5,442.8 502.8,441.8 495.8,441.8 M506.4,432.7 513.9,433.5 M498.6,437.4 508.0,436.9 511.8,438.4 M499.1,439.5 502.8,440.2 502.8,441.8 M482.6,443.1 483.8,446.7 484.5,450.6 M484.5,450.6 489.2,452.4 493.9,454.4 502.1,455.5 M502.1,455.5 505.6,451.9 504.7,446.7 504.5,442.8 M465.6,444.6 465.6,447.2 463.3,448.5 463.3,451.1 M457.2,449.5 463.3,449.8 M463.3,451.1 463.5,452.9 462.8,454.4 M455.0,450.3 459.0,453.2 462.8,454.4 M462.8,454.4 468.5,455.7 467.0,459.4 M467.0,459.4 471.7,459.6 473.9,461.2 470.3,464.0 465.6,463.8 463.3,463.0 467.0,459.4 M465.6,463.8 465.6,468.1 466.8,469.2 M471.7,459.6 479.8,459.6 479.8,457.0 484.5,455.7 489.2,456.3 489.2,458.3 487.1,461.2 481.4,462.2 478.3,461.7 473.9,461.2 M479.8,457.0 477.9,452.4 484.5,450.6 M489.2,456.3 493.4,454.4 M469.4,440.5 472.5,440.8 M481.4,462.2 481.4,464.3 M489.2,458.3 493.4,458.8 501.4,457.3 503.1,458.6 498.6,463.0 493.4,463.8 488.0,462.5 487.1,461.2 M501.4,457.3 507.8,459.1 511.8,457.5 515.5,461.9 515.5,464.8 519.1,465.6 M502.6,468.1 508.0,469.4 512.7,468.4 516.5,469.4 M498.6,463.0 499.8,466.1 502.6,468.1 M502.6,468.1 501.9,473.1 503.3,475.6 510.4,475.6 511.5,473.8 515.1,473.8 M496.2,479.8 498.6,476.7 503.3,475.6 M510.4,475.6 510.4,477.2 M493.4,463.8 493.9,466.3 494.8,470.0 496.9,471.8 497.4,474.1 498.6,476.7 M481.2,464.8 486.1,464.0 488.0,462.5 M486.1,465.6 493.9,466.3 M486.1,465.6 486.8,468.7 490.6,471.2 492.7,472.5 M494.8,470.0 492.7,472.5 M494.8,474.1 497.4,474.1 M496.9,471.8 501.9,473.1 M428.4,474.1 433.8,474.1 432.9,479.0 431.7,482.9 431.7,486.2 M444.9,470.2 450.8,471.8 456.7,472.8 M504.7,446.7 504.5,449.0 512.7,449.0 521.0,449.8 524.0,447.7 526.1,444.4 522.1,440.2 515.5,437.1 M524.0,447.7 529.2,447.2 532.7,452.1 538.6,453.4 543.3,454.2 542.6,458.8 539.1,460.6 M511.8,457.5 517.4,458.3 519.8,462.5 515.5,464.8 M432.0,440.0 430.3,441.5 434.3,442.6 M442.1,440.2 444.4,438.2 M546.8,475.1 551.6,476.2 554.6,479.8 552.7,480.5 553.9,486.2 549.0,486.5 543.3,487.3 535.5,487.3 533.9,489.6 M543.3,470.2 550.4,472.3 558.6,474.1 561.7,475.9 563.6,474.3 M551.6,476.2 555.1,475.6 558.6,474.1 M554.6,479.8 558.6,481.8 562.1,480.5 564.3,483.1 M555.1,475.6 558.6,481.8 M553.9,486.2 557.4,489.8 556.3,494.5 561.7,500.2 563.6,504.8 M576.0,486.0 583.3,483.6 588.8,485.5 593.2,487.8 M593.2,487.8 591.8,494.5 592.8,501.0 594.6,502.3 592.5,505.4 597.0,512.1 594.2,517.2 M549.0,486.5 546.1,492.4 540.5,496.1 541.4,499.2 544.3,499.9 548.0,502.3 554.4,506.9 558.6,507.2 561.4,508.7 M558.6,507.2 561.0,504.8 562.1,504.8 M540.5,496.1 533.9,497.9 M541.4,499.2 536.3,501.0 538.6,503.5 535.1,506.1 531.5,506.4 M533.0,496.3 532.7,501.0 531.5,506.1 M531.8,496.8 533.0,496.3 535.1,493.2 533.9,492.9 M549.9,540.0 552.7,537.4 559.8,538.4 564.5,534.3 571.6,533.3 M571.6,533.3 578.6,530.7 580.3,525.5 579.1,523.7 573.0,523.2 570.6,519.8 M580.3,525.5 581.0,520.3 581.7,518.0 M571.6,533.3 574.2,539.5 M568.7,518.3 569.7,518.8 M565.7,463.0 559.8,458.3 559.8,453.2 569.2,449.0 578.6,451.1 588.0,451.1 593.9,449.8 592.8,443.1 602.2,441.5 611.6,439.5 616.3,442.3 623.4,443.9 630.4,442.8 637.5,450.6 644.5,450.6 649.3,454.2 654.7,455.5 M654.7,455.5 650.4,460.6 644.5,460.4 643.4,465.6 638.7,466.1 638.0,471.5 M638.0,471.5 625.7,471.8 616.3,472.5 609.2,476.4 604.5,472.8 595.1,470.0 587.1,464.5 581.0,466.1 581.0,475.6 576.3,473.1 572.7,474.3 M581.0,475.6 586.9,472.0 592.8,475.9 596.3,479.0 605.7,485.7 M593.2,487.8 593.2,490.4 601.0,488.0 605.7,485.7 609.2,486.7 613.9,485.2 617.5,483.1 617.7,487.5 625.5,486.2 M638.0,471.5 628.1,478.0 622.7,480.3 625.5,486.2 M609.2,476.4 615.1,478.5 622.7,480.3 M615.1,478.5 611.6,478.5 608.1,481.1 609.2,486.7 M616.3,472.5 615.1,475.1 621.0,476.9 622.7,480.3 M625.5,486.2 616.8,489.3 616.3,494.5 612.8,497.1 612.3,499.9 605.5,502.5 605.2,505.1 596.3,506.4 592.5,505.4 M625.5,486.2 632.3,490.6 624.5,497.6 624.8,502.3 621.0,506.1 613.9,510.8 614.4,516.2 616.3,519.3 611.1,519.6 609.7,521.1 M632.3,490.6 635.1,498.4 634.7,502.0 639.8,504.3 646.9,507.9 651.6,510.0 656.6,510.3 659.8,509.5 665.0,510.5 670.4,507.4 675.1,506.4 678.2,509.5 M637.7,507.9 639.8,504.3 M637.7,507.9 642.2,510.3 646.9,511.6 651.6,513.6 656.6,514.1 656.6,510.3 M658.2,512.3 659.8,509.5 M658.2,512.3 660.6,513.4 665.7,513.1 665.0,510.5 M656.6,514.1 658.2,514.4 660.6,515.2 665.7,517.2 666.7,518.0 663.8,521.4 667.1,527.3 M658.2,514.4 656.8,519.0 658.7,525.5 M678.2,509.5 673.3,513.6 671.9,517.8 668.8,520.6 667.1,527.3 M678.2,509.5 681.5,511.3 681.0,515.7 678.7,520.3 682.0,522.4 682.7,525.2 687.2,526.5 M687.2,526.5 684.8,529.9 679.9,531.5 679.2,534.6 681.3,540.2 680.3,543.6 682.7,548.8 683.6,551.9 681.7,555.5 M687.2,526.5 689.5,524.5 695.2,529.4 693.7,532.5 696.8,534.0 700.3,538.7 702.5,543.1 702.2,544.9 M684.8,529.9 685.7,532.0 687.4,536.9 689.5,535.3 694.0,535.1 695.6,539.7 697.8,542.3 697.5,545.4 M690.5,550.8 690.5,547.2 692.8,545.1 697.5,545.4 702.2,544.9 M702.2,544.9 702.2,550.6 698.5,552.1 696.6,554.2 695.2,555.5 M684.8,565.8 687.2,567.6 689.5,566.3 M689.5,524.5 694.0,523.4 699.9,523.2 703.4,526.8 M654.7,455.5 656.3,457.0 661.0,458.6 663.4,465.8 674.0,467.9 677.5,472.0 686.9,472.3 696.3,474.9 708.1,472.0 712.8,469.2 712.6,465.8 721.1,465.0 722.2,461.4 730.9,461.7 726.5,458.3 722.2,453.4 M654.7,455.5 658.7,454.2 665.7,451.1 678.7,453.7 682.0,447.7 689.7,449.8 691.6,452.4 701.0,453.9 710.5,454.7 718.7,452.6 722.2,453.4 726.5,454.4 M726.5,454.4 731.4,447.7 734.0,444.6 740.1,444.1 745.8,445.9 749.3,452.6 749.5,453.7 756.8,456.0 757.5,459.1 766.3,457.3 764.6,460.9 762.3,466.1 758.0,466.3 758.3,470.2 756.8,473.1 M756.8,473.1 755.0,471.5 750.5,473.8 747.9,474.3 742.0,479.0 M746.0,484.9 751.4,482.6 M707.2,577.2 709.3,580.0 712.8,578.7 717.3,578.7 719.4,576.7 720.3,571.2 725.8,571.5 M781.1,589.1 781.1,606.1 M741.5,606.6 743.4,604.8 743.9,606.9 M752.8,620.9 752.8,664.0 M752.8,649.5 774.0,649.5 781.1,649.5 M774.0,625.5 774.0,649.5 M781.1,649.5 781.1,681.1 M781.1,657.3 799.9,657.3 805.8,657.0 810.5,655.2 M781.1,670.2 787.0,672.8 790.5,675.4 795.2,675.4 798.0,677.4 802.0,679.3" fill="none" stroke="#2519cf" stroke-width="0.85" stroke-linejoin="round" opacity="0.92"/>
</g>
<g font-size="7.7" fill="#182a34" stroke="#182a34" stroke-width="0.26" fill-opacity="0.95"><text transform="translate(32.5,760.5) scale(0.86,1)" text-anchor="middle">D</text><text transform="translate(442.1,760.5) scale(0.86,1)" text-anchor="middle">D</text><text transform="translate(32.5,739.8) scale(0.86,1)" text-anchor="middle">E</text><text transform="translate(442.1,739.8) scale(0.86,1)" text-anchor="middle">E</text><text transform="translate(32.5,719.1) scale(0.86,1)" text-anchor="middle">F</text><text transform="translate(442.1,719.1) scale(0.86,1)" text-anchor="middle">F</text><text transform="translate(32.5,698.5) scale(0.86,1)" text-anchor="middle">G</text><text transform="translate(442.1,698.5) scale(0.86,1)" text-anchor="middle">G</text><text transform="translate(32.5,677.8) scale(0.86,1)" text-anchor="middle">H</text><text transform="translate(442.1,677.8) scale(0.86,1)" text-anchor="middle">H</text><text transform="translate(32.5,657.1) scale(0.86,1)" text-anchor="middle">J</text><text transform="translate(442.1,657.1) scale(0.86,1)" text-anchor="middle">J</text><text transform="translate(32.5,636.4) scale(0.86,1)" text-anchor="middle">K</text><text transform="translate(442.1,636.4) scale(0.86,1)" text-anchor="middle">K</text><text transform="translate(32.5,615.8) scale(0.86,1)" text-anchor="middle">L</text><text transform="translate(442.1,615.8) scale(0.86,1)" text-anchor="middle">L</text><text transform="translate(32.5,595.1) scale(0.86,1)" text-anchor="middle">M</text><text transform="translate(442.1,595.1) scale(0.86,1)" text-anchor="middle">M</text><text transform="translate(32.5,553.7) scale(0.86,1)" text-anchor="middle">P</text><text transform="translate(32.5,533.1) scale(0.86,1)" text-anchor="middle">Q</text><text transform="translate(442.1,533.1) scale(0.86,1)" text-anchor="middle">Q</text><text transform="translate(32.5,512.4) scale(0.86,1)" text-anchor="middle">R</text><text transform="translate(442.1,512.4) scale(0.86,1)" text-anchor="middle">R</text><text transform="translate(32.5,491.7) scale(0.86,1)" text-anchor="middle">S</text><text transform="translate(32.5,471.1) scale(0.86,1)" text-anchor="middle">T</text><text transform="translate(32.5,450.4) scale(0.86,1)" text-anchor="middle">U</text><text transform="translate(32.5,429.7) scale(0.86,1)" text-anchor="middle">V</text><text transform="translate(442.1,429.7) scale(0.86,1)" text-anchor="middle">V</text><text transform="translate(32.5,409.0) scale(0.86,1)" text-anchor="middle" opacity="0.3">W</text><text transform="translate(442.1,409.0) scale(0.86,1)" text-anchor="middle">W</text><text transform="translate(32.5,383.2) scale(0.86,1)" text-anchor="middle">X</text><text transform="translate(442.1,383.2) scale(0.86,1)" text-anchor="middle">X</text><text transform="translate(32.5,574.2) scale(0.86,1)" text-anchor="middle">1N</text><text transform="translate(46.6,574.2) scale(0.86,1)" text-anchor="middle">2</text><text transform="translate(60.7,574.2) scale(0.86,1)" text-anchor="middle">3</text><text transform="translate(74.8,574.2) scale(0.86,1)" text-anchor="middle">4</text><text transform="translate(89.0,574.2) scale(0.86,1)" text-anchor="middle">5</text><text transform="translate(103.1,574.2) scale(0.86,1)" text-anchor="middle">6</text><text transform="translate(117.2,574.2) scale(0.86,1)" text-anchor="middle">7</text><text transform="translate(131.3,574.2) scale(0.86,1)" text-anchor="middle">8</text><text transform="translate(145.5,574.2) scale(0.86,1)" text-anchor="middle">9</text><text transform="translate(159.6,574.2) scale(0.86,1)" text-anchor="middle">10</text><text transform="translate(173.7,574.2) scale(0.86,1)" text-anchor="middle">11</text><text transform="translate(187.8,574.2) scale(0.86,1)" text-anchor="middle">12</text><text transform="translate(202.0,574.2) scale(0.86,1)" text-anchor="middle">13</text><text transform="translate(216.1,574.2) scale(0.86,1)" text-anchor="middle">14</text><text transform="translate(230.2,574.2) scale(0.86,1)" text-anchor="middle">15</text><text transform="translate(244.3,574.2) scale(0.86,1)" text-anchor="middle">16</text><text transform="translate(258.5,574.2) scale(0.86,1)" text-anchor="middle">17</text><text transform="translate(272.6,574.2) scale(0.86,1)" text-anchor="middle">18</text><text transform="translate(286.7,574.2) scale(0.86,1)" text-anchor="middle">19</text><text transform="translate(300.8,574.2) scale(0.86,1)" text-anchor="middle">20</text><text transform="translate(315.0,574.2) scale(0.86,1)" text-anchor="middle">21</text><text transform="translate(329.1,574.2) scale(0.86,1)" text-anchor="middle">22</text><text transform="translate(343.2,574.2) scale(0.86,1)" text-anchor="middle">23</text><text transform="translate(357.3,574.2) scale(0.86,1)" text-anchor="middle">24</text><text transform="translate(371.5,574.2) scale(0.86,1)" text-anchor="middle">25</text><text transform="translate(385.6,574.2) scale(0.86,1)" text-anchor="middle">26</text><text transform="translate(399.7,574.2) scale(0.86,1)" text-anchor="middle">27</text><text transform="translate(413.8,574.2) scale(0.86,1)" text-anchor="middle">28</text><text transform="translate(428.0,574.2) scale(0.86,1)" text-anchor="middle">29</text><text transform="translate(442.1,574.2) scale(0.86,1)" text-anchor="middle">30N</text><text transform="translate(456.2,574.2) scale(0.86,1)" text-anchor="middle">31</text><text transform="translate(470.3,574.2) scale(0.86,1)" text-anchor="middle">32</text><text transform="translate(484.5,574.2) scale(0.86,1)" text-anchor="middle">33</text><text transform="translate(498.6,574.2) scale(0.86,1)" text-anchor="middle">34</text><text transform="translate(512.7,574.2) scale(0.86,1)" text-anchor="middle">35</text><text transform="translate(526.8,574.2) scale(0.86,1)" text-anchor="middle">36</text><text transform="translate(541.0,574.2) scale(0.86,1)" text-anchor="middle">37</text><text transform="translate(555.1,574.2) scale(0.86,1)" text-anchor="middle">38</text><text transform="translate(569.2,574.2) scale(0.86,1)" text-anchor="middle">39</text><text transform="translate(583.3,574.2) scale(0.86,1)" text-anchor="middle">40</text><text transform="translate(597.5,574.2) scale(0.86,1)" text-anchor="middle">41</text><text transform="translate(611.6,574.2) scale(0.86,1)" text-anchor="middle">42</text><text transform="translate(625.7,574.2) scale(0.86,1)" text-anchor="middle">43</text><text transform="translate(639.8,574.2) scale(0.86,1)" text-anchor="middle">44</text><text transform="translate(654.0,574.2) scale(0.86,1)" text-anchor="middle">45</text><text transform="translate(668.1,574.2) scale(0.86,1)" text-anchor="middle">46</text><text transform="translate(682.2,574.2) scale(0.86,1)" text-anchor="middle">47</text><text transform="translate(696.3,574.2) scale(0.86,1)" text-anchor="middle">48</text><text transform="translate(710.5,574.2) scale(0.86,1)" text-anchor="middle">49</text><text transform="translate(724.6,574.2) scale(0.86,1)" text-anchor="middle">50</text><text transform="translate(738.7,574.2) scale(0.86,1)" text-anchor="middle">51</text><text transform="translate(752.8,574.2) scale(0.86,1)" text-anchor="middle">52</text><text transform="translate(767.0,574.2) scale(0.86,1)" text-anchor="middle">53</text><text transform="translate(781.1,574.2) scale(0.86,1)" text-anchor="middle">54</text><text transform="translate(795.2,574.2) scale(0.86,1)" text-anchor="middle">55</text><text transform="translate(809.3,574.2) scale(0.86,1)" text-anchor="middle">56</text><text transform="translate(823.5,574.2) scale(0.86,1)" text-anchor="middle">57</text><text transform="translate(837.6,574.2) scale(0.86,1)" text-anchor="middle">58</text><text transform="translate(851.7,574.2) scale(0.86,1)" text-anchor="middle">59</text><text transform="translate(865.8,574.2) scale(0.86,1)" text-anchor="middle">60</text><text transform="translate(32.5,780.9) scale(0.86,1)" text-anchor="middle">1C</text><text transform="translate(46.6,780.9) scale(0.86,1)" text-anchor="middle">2</text><text transform="translate(60.7,780.9) scale(0.86,1)" text-anchor="middle">3</text><text transform="translate(74.8,780.9) scale(0.86,1)" text-anchor="middle">4</text><text transform="translate(89.0,780.9) scale(0.86,1)" text-anchor="middle">5</text><text transform="translate(103.1,780.9) scale(0.86,1)" text-anchor="middle">6</text><text transform="translate(117.2,780.9) scale(0.86,1)" text-anchor="middle">7</text><text transform="translate(131.3,780.9) scale(0.86,1)" text-anchor="middle">8</text><text transform="translate(145.5,780.9) scale(0.86,1)" text-anchor="middle">9</text><text transform="translate(159.6,780.9) scale(0.86,1)" text-anchor="middle">10</text><text transform="translate(173.7,780.9) scale(0.86,1)" text-anchor="middle">11</text><text transform="translate(187.8,780.9) scale(0.86,1)" text-anchor="middle">12</text><text transform="translate(202.0,780.9) scale(0.86,1)" text-anchor="middle">13</text><text transform="translate(216.1,780.9) scale(0.86,1)" text-anchor="middle">14</text><text transform="translate(230.2,780.9) scale(0.86,1)" text-anchor="middle">15</text><text transform="translate(244.3,780.9) scale(0.86,1)" text-anchor="middle">16</text><text transform="translate(258.5,780.9) scale(0.86,1)" text-anchor="middle">17</text><text transform="translate(272.6,780.9) scale(0.86,1)" text-anchor="middle">18</text><text transform="translate(286.7,780.9) scale(0.86,1)" text-anchor="middle">19</text><text transform="translate(300.8,780.9) scale(0.86,1)" text-anchor="middle">20</text><text transform="translate(315.0,780.9) scale(0.86,1)" text-anchor="middle">21</text><text transform="translate(329.1,780.9) scale(0.86,1)" text-anchor="middle">22</text><text transform="translate(343.2,780.9) scale(0.86,1)" text-anchor="middle">23</text><text transform="translate(357.3,780.9) scale(0.86,1)" text-anchor="middle">24</text><text transform="translate(371.5,780.9) scale(0.86,1)" text-anchor="middle">25</text><text transform="translate(385.6,780.9) scale(0.86,1)" text-anchor="middle">26</text><text transform="translate(399.7,780.9) scale(0.86,1)" text-anchor="middle">27</text><text transform="translate(413.8,780.9) scale(0.86,1)" text-anchor="middle">28</text><text transform="translate(428.0,780.9) scale(0.86,1)" text-anchor="middle">29</text><text transform="translate(442.1,780.9) scale(0.86,1)" text-anchor="middle">30C</text><text transform="translate(456.2,780.9) scale(0.86,1)" text-anchor="middle">31</text><text transform="translate(470.3,780.9) scale(0.86,1)" text-anchor="middle">32</text><text transform="translate(484.5,780.9) scale(0.86,1)" text-anchor="middle">33</text><text transform="translate(498.6,780.9) scale(0.86,1)" text-anchor="middle">34</text><text transform="translate(512.7,780.9) scale(0.86,1)" text-anchor="middle">35</text><text transform="translate(526.8,780.9) scale(0.86,1)" text-anchor="middle">36</text><text transform="translate(541.0,780.9) scale(0.86,1)" text-anchor="middle">37</text><text transform="translate(555.1,780.9) scale(0.86,1)" text-anchor="middle">38</text><text transform="translate(569.2,780.9) scale(0.86,1)" text-anchor="middle">39</text><text transform="translate(583.3,780.9) scale(0.86,1)" text-anchor="middle">40</text><text transform="translate(597.5,780.9) scale(0.86,1)" text-anchor="middle">41</text><text transform="translate(611.6,780.9) scale(0.86,1)" text-anchor="middle">42</text><text transform="translate(625.7,780.9) scale(0.86,1)" text-anchor="middle">43</text><text transform="translate(639.8,780.9) scale(0.86,1)" text-anchor="middle">44</text><text transform="translate(654.0,780.9) scale(0.86,1)" text-anchor="middle">45</text><text transform="translate(668.1,780.9) scale(0.86,1)" text-anchor="middle">46</text><text transform="translate(682.2,780.9) scale(0.86,1)" text-anchor="middle">47</text><text transform="translate(696.3,780.9) scale(0.86,1)" text-anchor="middle">48</text><text transform="translate(710.5,780.9) scale(0.86,1)" text-anchor="middle">49</text><text transform="translate(724.6,780.9) scale(0.86,1)" text-anchor="middle">50</text><text transform="translate(738.7,780.9) scale(0.86,1)" text-anchor="middle">51</text><text transform="translate(752.8,780.9) scale(0.86,1)" text-anchor="middle">52</text><text transform="translate(767.0,780.9) scale(0.86,1)" text-anchor="middle">53</text><text transform="translate(781.1,780.9) scale(0.86,1)" text-anchor="middle">54</text><text transform="translate(795.2,780.9) scale(0.86,1)" text-anchor="middle">55</text><text transform="translate(809.3,780.9) scale(0.86,1)" text-anchor="middle">56</text><text transform="translate(823.5,780.9) scale(0.86,1)" text-anchor="middle">57</text><text transform="translate(837.6,780.9) scale(0.86,1)" text-anchor="middle">58</text><text transform="translate(851.7,780.9) scale(0.86,1)" text-anchor="middle">59</text><text transform="translate(865.8,780.9) scale(0.86,1)" text-anchor="middle">60</text><text transform="translate(459.7,383.2) scale(0.86,1)" text-anchor="middle">31</text><text transform="translate(484.5,383.2) scale(0.86,1)" text-anchor="middle">33</text><text transform="translate(512.7,383.2) scale(0.86,1)" text-anchor="middle">35</text><text transform="translate(537.4,383.2) scale(0.86,1)" text-anchor="middle">37</text></g>
</g>
<g filter="url(#bl2)"><path d="M25.4,365.3 V789.1 M39.5,365.3 V789.1 M53.6,365.3 V789.1 M67.8,365.3 V789.1 M81.9,365.3 V789.1 M96.0,365.3 V789.1 M110.2,365.3 V789.1 M124.3,365.3 V789.1 M138.4,365.3 V789.1 M152.5,365.3 V789.1 M166.7,365.3 V789.1 M180.8,365.3 V789.1 M194.9,365.3 V789.1 M209.0,365.3 V789.1 M223.2,365.3 V789.1 M237.3,365.3 V789.1 M251.4,365.3 V789.1 M265.5,365.3 V789.1 M279.6,365.3 V789.1 M293.8,365.3 V789.1 M307.9,365.3 V789.1 M322.0,365.3 V789.1 M336.1,365.3 V789.1 M350.3,365.3 V789.1 M364.4,365.3 V789.1 M378.5,365.3 V789.1 M392.6,365.3 V789.1 M406.8,365.3 V789.1 M420.9,365.3 V789.1 M435.0,365.3 V789.1 M449.1,365.3 V789.1 M463.3,396.3 V417.0 M463.3,437.7 V789.1 M477.4,396.3 V789.1 M491.5,396.3 V789.1 M505.6,396.3 V789.1 M519.8,396.3 V789.1 M533.9,396.3 V789.1 M548.0,365.3 V789.1 M562.1,365.3 V789.1 M576.3,365.3 V789.1 M590.4,365.3 V789.1 M604.5,365.3 V789.1 M618.6,365.3 V789.1 M632.8,365.3 V789.1 M646.9,365.3 V789.1 M661.0,365.3 V789.1 M675.1,365.3 V789.1 M689.3,365.3 V789.1 M703.4,365.3 V789.1 M717.5,365.3 V789.1 M731.6,365.3 V789.1 M745.8,365.3 V789.1 M759.9,365.3 V789.1 M774.0,365.3 V789.1 M788.1,365.3 V789.1 M802.3,365.3 V789.1 M816.4,365.3 V789.1 M830.5,365.3 V789.1 M844.6,365.3 V789.1 M858.8,365.3 V789.1 M872.9,365.3 V789.1 M470.3,365.3 V396.3 M498.6,365.3 V396.3 M526.8,365.3 V396.3 M456.2,417.0 V437.7" fill="none" stroke="#04202e" stroke-opacity="0.56" stroke-width="0.8"/><path d="M25.4,365.3 H873.2 M25.4,396.3 H873.2 M25.4,417.0 H873.2 M25.4,437.7 H873.2 M25.4,458.3 H873.2 M25.4,479.0 H873.2 M25.4,499.7 H873.2 M25.4,520.3 H873.2 M25.4,541.0 H873.2 M25.4,561.7 H873.2 M25.4,582.4 H873.2 M25.4,603.0 H873.2 M25.4,623.7 H873.2 M25.4,644.4 H873.2 M25.4,665.0 H873.2 M25.4,685.7 H873.2 M25.4,706.4 H873.2 M25.4,727.1 H873.2 M25.4,747.7 H873.2 M25.4,768.4 H873.2 M25.4,789.1 H873.2" fill="none" stroke="#04202e" stroke-opacity="0.66" stroke-width="0.95"/></g>
<g font-size="5.9" font-weight="bold" fill="#3c3c3c" stroke="#3c3c3c" stroke-width="0.12" filter="url(#bl2)"><text x="23.6" y="367.3" text-anchor="end">84N</text><text x="23.6" y="398.3" text-anchor="end">72N</text><text x="23.6" y="419.0" text-anchor="end">64N</text><text x="23.6" y="439.7" text-anchor="end">56N</text><text x="23.6" y="460.3" text-anchor="end">48N</text><text x="23.6" y="481.0" text-anchor="end">40N</text><text x="23.6" y="501.7" text-anchor="end">32N</text><text x="23.6" y="522.3" text-anchor="end">24N</text><text x="23.6" y="543.0" text-anchor="end">16N</text><text x="23.6" y="563.7" text-anchor="end">8N</text><text x="23.6" y="584.4" text-anchor="end">0</text><text x="23.6" y="605.0" text-anchor="end">8S</text><text x="23.6" y="625.7" text-anchor="end">16S</text><text x="23.6" y="646.4" text-anchor="end">24S</text><text x="23.6" y="667.0" text-anchor="end">32S</text><text x="23.6" y="687.7" text-anchor="end">40S</text><text x="23.6" y="708.4" text-anchor="end">48S</text><text x="23.6" y="729.1" text-anchor="end">56S</text><text x="23.6" y="749.7" text-anchor="end">64S</text><text x="23.6" y="770.4" text-anchor="end">72S</text><text x="23.6" y="791.1" text-anchor="end">80S</text></g>
<path d="M858.7,743.6 Q861.3,756.0 873.7,758.6 Q861.3,761.2 858.7,773.6 Q856.1,761.2 843.7,758.6 Q856.1,756.0 858.7,743.6 Z" fill="#fff" fill-opacity="0.62" filter="url(#bl)"/>
</svg>
<div class="abs ft" id="ft" style="left:189px;top:803px">Please ensure all coordinate and parameter inputs are specified in Meters.</div>
</body></html>
